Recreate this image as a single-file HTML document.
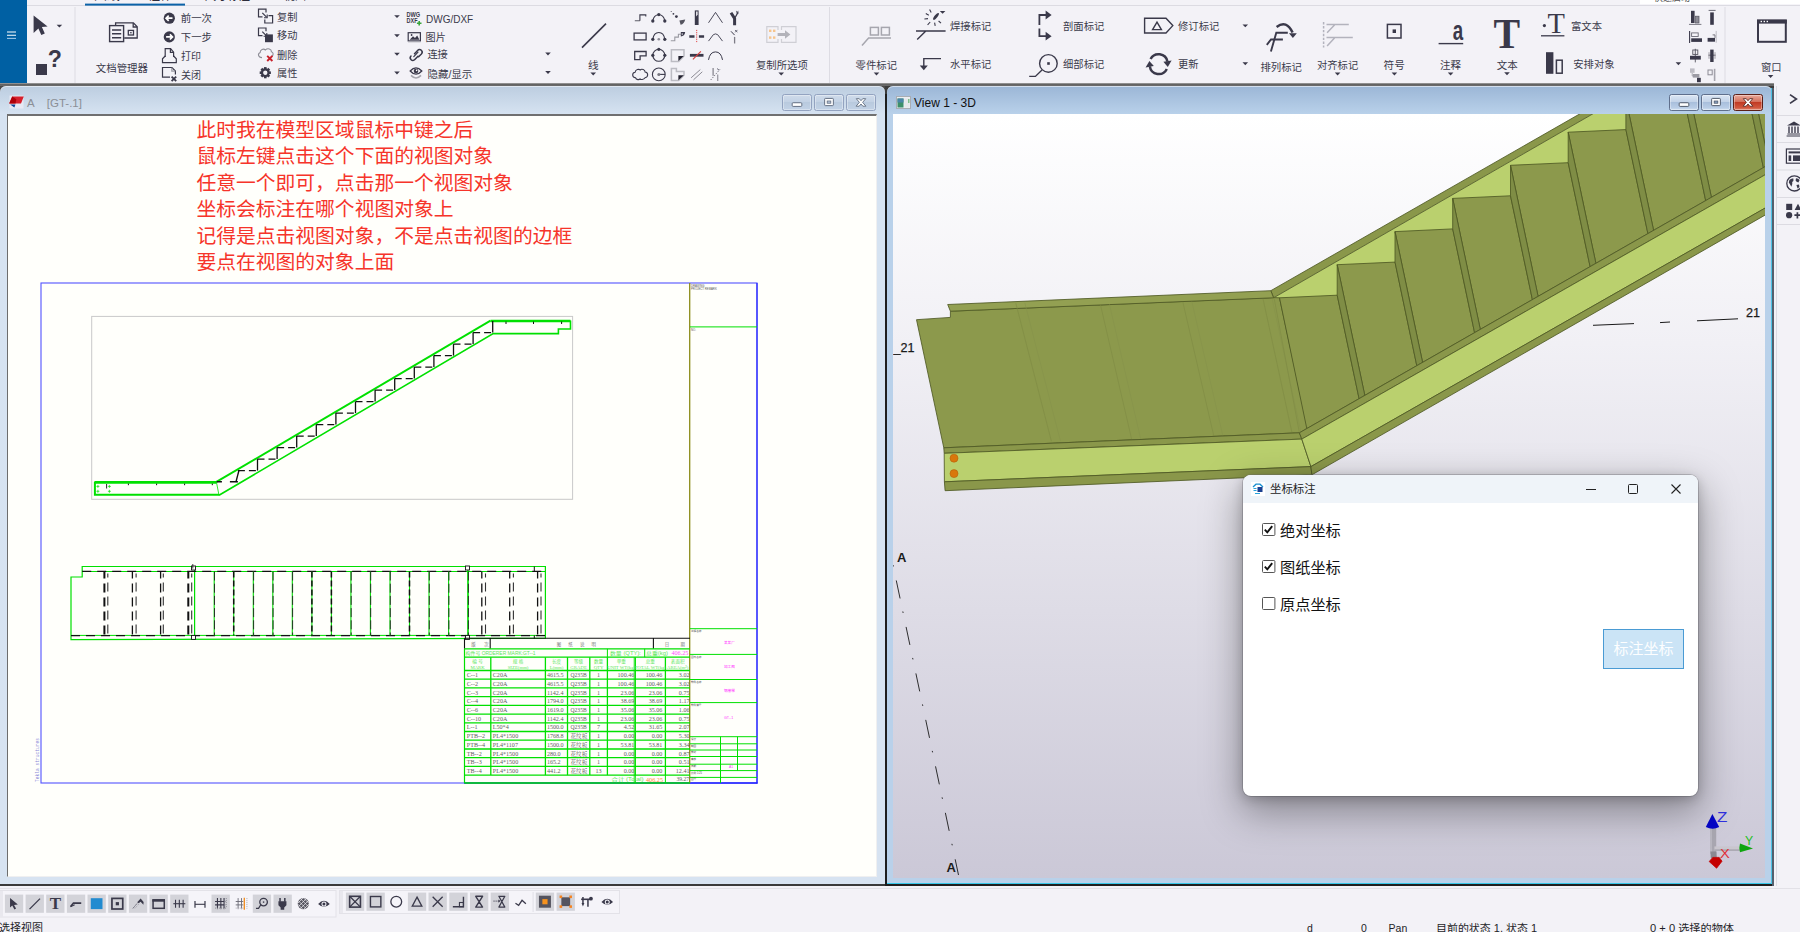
<!DOCTYPE html>
<html lang="zh-CN">
<head>
<meta charset="utf-8">
<title>Tekla Structures - 坐标标注</title>
<style>
*{box-sizing:border-box}
html,body{margin:0;padding:0}
body{width:1800px;height:932px;position:relative;overflow:hidden;background:#f3f2f7;font-family:"Liberation Sans","Noto Sans CJK SC",sans-serif;color:#3b3a4a;font-size:10.5px}
.abs{position:absolute}
svg{position:absolute;left:0;top:0;overflow:hidden}
#ribbon{position:absolute;left:0;top:0;width:1800px;height:83px;background:#f3f2f7;overflow:hidden}
#win1{position:absolute;left:0;top:84px;width:885px;height:802px}
#win2{position:absolute;left:885px;top:84px;width:889px;height:802px}
.wbtn{position:absolute;top:10px;width:30px;height:16px;border:1px solid #8f9fbd;border-radius:3px;background:linear-gradient(#c9d7e8,#b5c7de 50%,#c3d3e7)}
</style>
</head>
<body>

<div id="ribbon">
<svg width="1800" height="84" viewBox="0 0 1800 84"><rect x="0" y="0" width="1800" height="84" fill="#f3f2f7"/>
<rect x="27" y="5" width="1773" height="1" fill="#dcdbe2"/>
<rect x="85" y="3.6" width="100" height="2" fill="#0b62a8"/>
<rect x="0" y="0" width="27" height="83" fill="#0060a3"/>
<path d="M7,32 h9 M7,35.3 h9" stroke="#fff" stroke-width="1.1"/><path d="M7,38.4 h9" stroke="#9cc6e6" stroke-width="1.1"/>
<text x="94" y="0.2" font-size="12.5" fill="#2d2d3c" textLength="26" lengthAdjust="spacingAndGlyphs" >图纸</text>
<text x="149" y="0.2" font-size="12.5" fill="#2d2d3c" textLength="22" lengthAdjust="spacingAndGlyphs" >注释</text>
<text x="205" y="0.2" font-size="12.5" fill="#2d2d3c" textLength="45" lengthAdjust="spacingAndGlyphs" >尺寸标注</text>
<text x="284" y="0.2" font-size="12.5" fill="#2d2d3c" textLength="22" lengthAdjust="spacingAndGlyphs" >视图</text>
<rect x="1640" y="0" width="160" height="4.2" fill="#fff"/>
<text x="1654" y="0.6" font-size="10.5" fill="#555" textLength="36" lengthAdjust="spacingAndGlyphs" >快速启动</text>
<rect x="74.5" y="7" width="1" height="76" fill="#dddce3"/>
<rect x="829" y="7" width="1" height="76" fill="#dddce3"/>
<rect x="1724.5" y="7" width="1" height="76" fill="#dddce3"/>
<polygon points="33.6,15.4 33.6,32.9 38.4,28.4 41.3,35.1 44.8,33.4 41.9,27.1 47.6,26.6" fill="#3a394a"/>
<polygon points="56.6,24.8 62.2,24.8 59.4,27.6" fill="#3a394a"/>
<rect x="36" y="64" width="11" height="11" fill="#3a394a"/>
<text x="47.8" y="67.2" font-size="23.2" fill="#3a394a" font-weight="bold" font-family="Liberation Sans,sans-serif">?</text>
<g fill="none" stroke="#3a394a" stroke-width="1.3"><path d="M115.6,25 V22.9 H133.4 L137.2,26.7 V38 H124.2"/><path d="M133.2,23 V27 H137"/><rect x="128.3" y="30.4" width="5.2" height="4.6"/><rect x="130.2" y="32" width="1.4" height="1.4" fill="#3a394a" stroke="none"/></g>
<rect x="109.6" y="25.6" width="14" height="16" fill="#f3f2f7" stroke="#3a394a" stroke-width="1.4"/><path d="M112,29.9 h9.2 M112,33.8 h9.2 M112,37.7 h9.2" stroke="#3a394a" stroke-width="1.5"/>
<text x="95.8" y="71.95" font-size="10.6" fill="#3b3b4b" textLength="52.2" lengthAdjust="spacingAndGlyphs" >文档管理器</text>
<circle cx="169.3" cy="18.2" r="5.6" fill="#3a394a"/><path d="M172.5,18.2 h-6.2 M168.7,15.6 l-2.6,2.6 l2.6,2.6" stroke="#fff" stroke-width="1.7" fill="none"/>
<circle cx="169.3" cy="36.9" r="5.6" fill="#3a394a"/><path d="M166.1,36.9 h6.2 M169.9,34.3 l2.6,2.6 l-2.6,2.6" stroke="#fff" stroke-width="1.7" fill="none"/>
<text x="180.8" y="21.9" font-size="10.6" fill="#3b3b4b" textLength="31.2" lengthAdjust="spacingAndGlyphs" >前一次</text>
<text x="180.8" y="40.9" font-size="10.6" fill="#3b3b4b" textLength="31.2" lengthAdjust="spacingAndGlyphs" >下一步</text>
<g fill="none" stroke="#3a394a" stroke-width="1.2"><path d="M165.2,57 V48.7 H170.6 L173.6,52.2 V57"/><path d="M170.4,48.9 V52.4 H173.4"/><path d="M165.2,56 L162.5,58.8 V62.6 H176.3 V58.8 L173.6,56"/></g>
<text x="181" y="59.9" font-size="10.6" fill="#3b3b4b" textLength="20" lengthAdjust="spacingAndGlyphs" >打印</text>
<g fill="none" stroke="#3a394a" stroke-width="1.2"><path d="M170,77.2 H162.5 V67.5 H172 L175.4,71 V74.4"/><path d="M171.8,67.7 V71.2 H175.2" stroke="#9a9aa3"/></g><path d="M171.6,76.6 l4.6,4.6 M176.2,76.6 l-4.6,4.6" stroke="#3a394a" stroke-width="1.8"/>
<text x="181" y="79.2" font-size="10.6" fill="#3b3b4b" textLength="20" lengthAdjust="spacingAndGlyphs" >关闭</text>
<g fill="none" stroke="#3a394a" stroke-width="1.2"><path d="M262.5,16.8 H258.5 V9.2 H266 V12.5"/><path d="M268.5,15.6 H272.6 V23 H264.8 V19.5"/><path d="M262.3,12.8 L266.6,17.2"/><path d="M267.2,14.6 V17.8 H264" stroke-width="1.1"/></g>
<text x="277" y="20.55" font-size="10.6" fill="#3b3b4b" textLength="20.4" lengthAdjust="spacingAndGlyphs" >复制</text>
<g fill="none" stroke="#3a394a" stroke-width="1.2"><path d="M262.5,35.6 H258.5 V28 H266 V31.3"/><path d="M262.3,31.6 L266.2,35.6"/><path d="M266.8,33 V36.2 H263.6" stroke-width="1.1"/></g><rect x="265" y="34.4" width="7.9" height="7.8" fill="#3a394a"/>
<text x="277" y="39.3" font-size="10.6" fill="#3b3b4b" textLength="20.4" lengthAdjust="spacingAndGlyphs" >移动</text>
<path d="M262,57.6 C258,57.6 257.4,53.6 260.2,52.4 C260,49.6 263.6,48.2 265.4,50 C267.6,47.6 271.6,49 271.4,51.8 C273.6,52.4 273.6,55.2 272,56" fill="none" stroke="#8d8d96" stroke-width="1.1"/><path d="M267.2,55.8 l5.2,5.2 M272.4,55.8 l-5.2,5.2" stroke="#c8202a" stroke-width="1.9"/>
<text x="277" y="58.8" font-size="10.6" fill="#3b3b4b" textLength="20.4" lengthAdjust="spacingAndGlyphs" >删除</text>
<g transform="translate(265.3,72.7)"><g fill="#3a394a"><rect x="-1.3" y="-5.6" width="2.6" height="3" transform="rotate(0)"/><rect x="-1.3" y="-5.6" width="2.6" height="3" transform="rotate(45)"/><rect x="-1.3" y="-5.6" width="2.6" height="3" transform="rotate(90)"/><rect x="-1.3" y="-5.6" width="2.6" height="3" transform="rotate(135)"/><rect x="-1.3" y="-5.6" width="2.6" height="3" transform="rotate(180)"/><rect x="-1.3" y="-5.6" width="2.6" height="3" transform="rotate(225)"/><rect x="-1.3" y="-5.6" width="2.6" height="3" transform="rotate(270)"/><rect x="-1.3" y="-5.6" width="2.6" height="3" transform="rotate(315)"/></g><circle r="3.3" fill="none" stroke="#3a394a" stroke-width="2.2"/></g>
<text x="277" y="77.05" font-size="10.6" fill="#3b3b4b" textLength="20.4" lengthAdjust="spacingAndGlyphs" >属性</text>
<polygon points="394.2,15.2 399.8,15.2 397.0,18.1" fill="#3a394a"/>
<polygon points="394.2,34.2 399.8,34.2 397.0,37.2" fill="#3a394a"/>
<polygon points="394.2,52.8 399.8,52.8 397.0,55.8" fill="#3a394a"/>
<polygon points="394.2,71.5 399.8,71.5 397.0,74.5" fill="#3a394a"/>
<text x="406.6" y="16.6" font-size="6.6" fill="#3a394a" textLength="13.6" lengthAdjust="spacingAndGlyphs" font-weight="bold" font-family="Liberation Sans,sans-serif">DWG</text>
<text x="406.6" y="22.8" font-size="6.6" fill="#3a394a" textLength="11" lengthAdjust="spacingAndGlyphs" font-weight="bold" font-family="Liberation Sans,sans-serif">DXF</text>
<path d="M419.2,21 v4.6 M416.9,23.3 h4.6" stroke="#3aa53a" stroke-width="1.6"/>
<text x="426" y="22.7" font-size="11" fill="#3b3b4b" textLength="47.2" lengthAdjust="spacingAndGlyphs" font-family="Liberation Sans,sans-serif">DWG/DXF</text>
<rect x="408.2" y="32.7" width="12.2" height="8.2" fill="none" stroke="#3a394a" stroke-width="1.2"/><path d="M409.6,39.8 L413,36.2 L415,38 L417.2,35.6 L419.4,39.8 Z" fill="#3a394a"/><circle cx="411.6" cy="35" r="0.9" fill="#3a394a"/><path d="M408,42 h12.6" stroke="#b9b9c0" stroke-width="0.8"/>
<text x="425.6" y="41.35" font-size="10.6" fill="#3b3b4b" textLength="20.2" lengthAdjust="spacingAndGlyphs" >图片</text>
<g fill="none" stroke="#3a394a" stroke-width="1.5" stroke-linecap="round"><path d="M414.5,53.7 L417.6,50.4 A2.6,2.6 0 0 1 421.4,54 L418.6,56.8"/><path d="M417.6,53 L414.4,56.4 A2.6,2.6 0 0 1 410.6,52.8"  transform="translate(0.4,3.2)"/><path d="M413.8,56.6 L418,52.2" stroke-width="1.2"/></g>
<text x="427.4" y="58.0" font-size="10.6" fill="#3b3b4b" textLength="20.4" lengthAdjust="spacingAndGlyphs" >连接</text>
<path d="M410.2,71 Q416,64.6 421.8,71 Q416,77.4 410.2,71 Z" fill="none" stroke="#3a394a" stroke-width="1.3"/><circle cx="416" cy="71" r="2.3" fill="#3a394a"/><circle cx="416.6" cy="70.4" r="0.8" fill="#fff"/><path d="M411,75.4 Q416,80.6 421,75.4" fill="none" stroke="#a5a5ad" stroke-width="1.6"/>
<text x="427.4" y="77.6" font-size="10.6" fill="#3b3b4b" textLength="45" lengthAdjust="spacingAndGlyphs" >隐藏/显示</text>
<polygon points="545.2,52.5 550.8,52.5 548.0,55.5" fill="#3a394a"/>
<polygon points="545.2,71.1 550.8,71.1 548.0,74.0" fill="#3a394a"/>
<path d="M582,47.6 L606,23.6" stroke="#3a394a" stroke-width="1.6"/>
<text x="588" y="68.5" font-size="10.6" fill="#3b3b4b" >线</text>
<polygon points="590.4,72.5 596.0,72.5 593.2,75.5" fill="#3a394a"/>
<g transform="translate(640.1,17.8)"><path d="M-5.3,2.9 H-0.2" stroke="#77767f" stroke-width="1.2" fill="none"/><path d="M-0.2,2.9 V-2.9 H5.7 V-1.4" fill="none" stroke="#3a394a" stroke-width="1.1"/></g>
<g transform="translate(658.8,17.8)"><path d="M-6,3.2 Q-5,-3 0,-3 Q5,-3 6,3.2" fill="none" stroke="#3a394a" stroke-width="1.1"/><circle cx="-6" cy="3.2" r="1.65" fill="#3a394a"/><circle cx="0" cy="-3.2" r="1.65" fill="#3a394a"/><circle cx="6" cy="3.2" r="1.65" fill="#3a394a"/></g>
<g transform="translate(677.8,17.8)"><circle cx="-6.6" cy="-6.2" r="0.5" fill="#3a394a"/><circle cx="-4.4" cy="-4" r="0.9" fill="#3a394a"/><circle cx="-1.4" cy="-1.2" r="1.4" fill="#3a394a"/><path d="M1.6,2.6 L7.4,1.6 Q6.4,6 2.8,7 Z" fill="#55545f"/></g>
<g transform="translate(696.7,17.8)"><rect x="-1.9" y="-7.4" width="3.8" height="14.6" fill="#3a394a"/><path d="M-0.6,-6.2 V-1.4 L0.9,-3 V-6.2 Z" fill="#f3f2f7"/></g>
<g transform="translate(715.5,17.8)"><path d="M-7,5 L0,-5.4 L7,5" fill="none" stroke="#3a394a" stroke-width="0.9"/></g>
<g transform="translate(734.6,17.8)"><path d="M0,7.4 V0.6 L-3.6,-5" fill="none" stroke="#3a394a" stroke-width="3"/><path d="M0.4,0 L3.4,-5.4" stroke="#3a394a" stroke-width="1.2"/><path d="M1.4,-6.8 l2.8,2.2 M4,-6.6 l-2.6,2" stroke="#3a394a" stroke-width="0.7"/></g>
<g transform="translate(640.1,36.5)"><rect x="-6" y="-3.4" width="12" height="6.8" fill="none" stroke="#3a394a" stroke-width="1.3"/></g>
<g transform="translate(658.8,36.5)"><path d="M-6,2.8 Q-5,-4 0,-4 Q5,-4 6,2.8" fill="none" stroke="#3a394a" stroke-width="1.1"/><circle cx="-6" cy="2.8" r="1.65" fill="#3a394a"/><circle cx="0" cy="2.8" r="1.3" fill="#8d8c96"/><circle cx="6" cy="2.8" r="1.65" fill="#3a394a"/></g>
<g transform="translate(677.8,36.5)"><path d="M-7,4.2 H-3 V0.6 H0.6 V-2.2 H3.2" fill="none" stroke="#9a9aa2" stroke-width="1.1"/><path d="M3,-4.6 H7.4 Q7,-0.6 3,0 Z" fill="#3a394a"/><path d="M4.4,-3.4 v2" stroke="#f3f2f7" stroke-width="0.8"/></g>
<g transform="translate(696.7,36.5)"><path d="M-7.4,0 H-2.2 M2.2,0 H7.4" stroke="#3a394a" stroke-width="2.6"/><path d="M0,-6.6 V6.6" stroke="#e03030" stroke-width="0.9" stroke-dasharray="1.2,1"/></g>
<g transform="translate(715.5,36.5)"><path d="M-7,4.6 L-2.2,-1.8 Q0,-3.4 2.2,-1.8 L7,4.6" fill="none" stroke="#3a394a" stroke-width="0.9"/></g>
<g transform="translate(734.6,36.5)"><path d="M0,7 V0.4" stroke="#7d7c86" stroke-width="1.3"/><path d="M-3.6,-5.2 L0,-1.4" stroke="#3a394a" stroke-width="1"/><path d="M0.4,-6.4 l2.4,2 M2.8,-6.6 l-2.2,2.4" stroke="#3a394a" stroke-width="0.7"/></g>
<g transform="translate(640.1,55.3)"><path d="M-5.4,-3.8 H6 V0.6 H0 V4.4 H-5.4 Z" fill="none" stroke="#3a394a" stroke-width="1.3"/></g>
<g transform="translate(658.8,55.3)"><circle r="6" fill="none" stroke="#3a394a" stroke-width="1.1"/><circle cx="0" cy="-6" r="1.65" fill="#3a394a"/><circle cx="-6" cy="0" r="1.65" fill="#3a394a"/><circle cx="6" cy="0" r="1.65" fill="#3a394a"/></g>
<g transform="translate(677.8,55.3)"><path d="M-6.4,-5.6 H6.2 V0.6 L0.8,6.2 H-6.4 Z" fill="none" stroke="#bcbcc3" stroke-width="1.5"/><path d="M0.6,0.6 H6 L0.6,5.6 Z" fill="#22212e"/></g>
<g transform="translate(696.7,55.3)"><path d="M-6.8,0 H6.8" stroke="#3a394a" stroke-width="2.8"/><path d="M-3.8,4 L4.2,-4" stroke="#d84040" stroke-width="1.1"/></g>
<g transform="translate(715.5,55.3)"><path d="M-7,4.6 Q-5.6,-3.4 0,-3.4 Q5.6,-3.4 7,4.6" fill="none" stroke="#3a394a" stroke-width="1"/></g>
<g transform="translate(640.1,74.4)"><path d="M-4.6,3.4 C-8.4,3 -8.2,-1.8 -5,-2.2 C-4.6,-5.2 -1,-5.6 0,-4.4 C1.6,-6 5,-4.8 5,-2.4 C8.4,-2 8.4,2.6 5,3.4 C3.6,5.6 0.4,5.4 0,4.6 C-1,5.6 -3.8,5.6 -4.6,3.4 Z" fill="none" stroke="#3a394a" stroke-width="1.1"/></g>
<g transform="translate(658.8,74.4)"><circle r="6.4" fill="none" stroke="#3a394a" stroke-width="1.1"/><path d="M0,0 H6.2" stroke="#3a394a" stroke-width="1.1"/><circle cx="0" cy="0" r="1.5" fill="#77767f"/></g>
<g transform="translate(677.8,74.4)"><path d="M-6.4,-6 H-1.4 V-2.8 H6.2 V0.8 L0.8,6.2 H-6.4 Z" fill="none" stroke="#bcbcc3" stroke-width="1.5"/><path d="M0.6,0.8 H6 L0.6,5.8 Z" fill="#22212e"/></g>
<g transform="translate(696.7,74.4)"><path d="M-5.6,3.4 L3.6,-4.8 M-3.2,5.4 L5.6,-2.6" stroke="#8d8c95" stroke-width="1"/></g>
<g transform="translate(715.5,74.4)"><path d="M-2.4,-6.4 V1.4" stroke="#77767f" stroke-width="1.1"/><path d="M2.2,0 V6.6" stroke="#9c9ba3" stroke-width="1.3"/><path d="M-4.8,5.6 L4.4,-5" stroke="#55545f" stroke-width="0.8" stroke-dasharray="1.3,1.3"/><path d="M1.6,-5.8 l2,1.6" stroke="#3a394a" stroke-width="0.8"/></g>
<g fill="none" stroke="#cfcfd5" stroke-width="1.2"><path d="M778,30 V26.6 H766.8 V42.4 H778 V39"/><path d="M781.5,30 V26.6 H796 V42.4 H781.5 V39"/></g><g fill="#f6c48c"><rect x="769" y="29.6" width="2.4" height="2.4"/><rect x="773" y="29.6" width="2.4" height="2.4"/><rect x="769" y="36.4" width="2.4" height="2.4"/><rect x="773" y="36.4" width="2.4" height="2.4"/></g><path d="M777.6,33 h7.4 v-2.8 l5.4,4.3 l-5.4,4.3 v-2.8 h-7.4 Z" fill="#b3b3ba"/>
<text x="756" y="68.5" font-size="10.6" fill="#3b3b4b" textLength="51.8" lengthAdjust="spacingAndGlyphs" >复制所选项</text>
<polygon points="778.4,72.5 784.0,72.5 781.2,75.5" fill="#3a394a"/>
<g fill="none" stroke="#a6a6ae" stroke-width="1.5"><rect x="870.4" y="27.4" width="8" height="7.6"/><rect x="881.4" y="27.4" width="8" height="7.6"/><path d="M891,38 H868.6 L862,45.6"/></g>
<text x="855.6" y="68.5" font-size="10.6" fill="#3b3b4b" textLength="41.4" lengthAdjust="spacingAndGlyphs" >零件标记</text>
<polygon points="873.7,72.5 879.3,72.5 876.5,75.5" fill="#3a394a"/>
<path d="M916,31 H945.6 M917.2,39.6 L925.6,31.2" stroke="#3a394a" stroke-width="1.4" fill="none"/><ellipse cx="936" cy="16.4" rx="1.5" ry="4.2" transform="rotate(38 936 16.4)" fill="#3a394a"/><path d="M925.8,13.6 l3,1.6 M924.4,19 l3.6,-0.4 M927.6,24.8 l2.6,-2.8 M934.6,22.6 l0.6,3.2 M938.6,21 l2.4,2.2 M929.6,9.6 l1.6,2.8" stroke="#3a394a" stroke-width="1.1"/>
<polygon points="939.8,11.0 945.4,11.0 942.6,13.8" fill="#3a394a"/>
<text x="950" y="29.8" font-size="10.6" fill="#3b3b4b" textLength="41.4" lengthAdjust="spacingAndGlyphs" >焊接标记</text>
<path d="M941,58.6 H923.8 V67" stroke="#3a394a" stroke-width="1.4" fill="none"/><polygon points="919.8,65.4 927.8,65.4 923.8,70.2" fill="#3a394a"/>
<text x="950" y="67.9" font-size="10.6" fill="#3b3b4b" textLength="41.4" lengthAdjust="spacingAndGlyphs" >水平标记</text>
<path d="M1039.4,25 V15 H1047" stroke="#3a394a" stroke-width="1.8" fill="none"/><polygon points="1045.6,10.6 1051.6,15 1045.6,19.4" fill="#3a394a"/><path d="M1039.4,28.4 V36.2 H1047" stroke="#3a394a" stroke-width="1.8" fill="none"/><polygon points="1045.6,31.8 1051.6,36.2 1045.6,40.6" fill="#3a394a"/>
<text x="1063" y="29.8" font-size="10.6" fill="#3b3b4b" textLength="41.4" lengthAdjust="spacingAndGlyphs" >剖面标记</text>
<circle cx="1048.4" cy="63.4" r="8.8" fill="none" stroke="#3a394a" stroke-width="1.4"/><rect x="1047.2" y="62.2" width="2.6" height="2.6" fill="#3a394a"/><path d="M1042,70 L1035.4,76.4 H1029.2" stroke="#3a394a" stroke-width="1.4" fill="none"/>
<text x="1063" y="67.9" font-size="10.6" fill="#3b3b4b" textLength="41.4" lengthAdjust="spacingAndGlyphs" >细部标记</text>
<path d="M1144.6,18.2 H1166 L1172.8,25.6 L1166,33 H1144.6 Z" fill="none" stroke="#3a394a" stroke-width="1.4"/><path d="M1157,22.2 L1152.6,29.6 H1161.4 Z" fill="none" stroke="#3a394a" stroke-width="1.4"/>
<text x="1178" y="29.8" font-size="10.6" fill="#3b3b4b" textLength="41.4" lengthAdjust="spacingAndGlyphs" >修订标记</text>
<polygon points="1242.5,24.4 1248.1,24.4 1245.3,27.2" fill="#3a394a"/>
<g fill="none" stroke="#3a394a" stroke-width="2.5"><path d="M1150.6,59 A9,9 0 0 1 1167.4,61.4"/><path d="M1166.8,69 A9,9 0 0 1 1149.8,66.4"/></g><polygon points="1163.4,61.8 1171.6,60.6 1167.8,67" fill="#3a394a"/><polygon points="1153.8,66 1145.6,67.4 1149.4,61" fill="#3a394a"/>
<text x="1178" y="67.5" font-size="10.6" fill="#3b3b4b" textLength="20.6" lengthAdjust="spacingAndGlyphs" >更新</text>
<polygon points="1242.5,62.3 1248.1,62.3 1245.3,65.2" fill="#3a394a"/>
<g fill="none" stroke="#3a394a" stroke-width="1.9"><path d="M1270.9,51.6 L1276.3,32.8 H1287.8"/><path d="M1266.8,44.9 L1271,39.5 H1282.9"/><path d="M1276.6,26.9 Q1286.6,19.4 1292.6,32.6" stroke-width="2.5"/></g><polygon points="1289,33.2 1296.8,33.2 1292.9,37.9" fill="#3a394a"/>
<text x="1260.4" y="71.1" font-size="10.6" fill="#3b3b4b" textLength="41.6" lengthAdjust="spacingAndGlyphs" >排列标记</text>
<g fill="none" stroke="#b3b3bd" stroke-width="1.5"><path d="M1323.6,22.1 V47.6" stroke-dasharray="2.4,1.5"/><path d="M1326.5,24.5 H1348.8 M1334.5,25 L1327.1,32.8"/><path d="M1326.5,37.5 H1352.8 M1334.5,38 L1327.1,45.9"/></g>
<text x="1317" y="68.7" font-size="10.6" fill="#3b3b4b" textLength="41.2" lengthAdjust="spacingAndGlyphs" >对齐标记</text>
<polygon points="1334.8,72.5 1340.4,72.5 1337.6,75.5" fill="#3a394a"/>
<rect x="1387.4" y="24.4" width="13.6" height="13.6" fill="none" stroke="#3a394a" stroke-width="1.5"/><rect x="1392.6" y="29.4" width="3.4" height="3.6" fill="#3a394a"/>
<text x="1383.6" y="68.7" font-size="10.6" fill="#3b3b4b" textLength="21.2" lengthAdjust="spacingAndGlyphs" >符号</text>
<polygon points="1391.6,72.5 1397.2,72.5 1394.4,75.5" fill="#3a394a"/>
<text x="1452.8" y="40.2" font-size="28" fill="#3a394a" textLength="10.4" lengthAdjust="spacingAndGlyphs" font-weight="bold" font-family="Liberation Sans,sans-serif">a</text>
<path d="M1438.6,43.6 H1463.2" stroke="#3a394a" stroke-width="1.4"/>
<text x="1440" y="68.7" font-size="10.6" fill="#3b3b4b" textLength="21" lengthAdjust="spacingAndGlyphs" >注释</text>
<polygon points="1447.8,72.5 1453.4,72.5 1450.6,75.5" fill="#3a394a"/>
<text x="1493.6" y="48.2" font-size="41.5" fill="#3a394a" textLength="26.6" lengthAdjust="spacingAndGlyphs" font-weight="bold" font-family="Liberation Serif,serif">T</text>
<text x="1496.7" y="68.9" font-size="10.6" fill="#3b3b4b" textLength="21" lengthAdjust="spacingAndGlyphs" >文本</text>
<polygon points="1504.2,72.3 1509.8,72.3 1507.0,75.2" fill="#3a394a"/>
<circle cx="1544.4" cy="25.6" r="1.6" fill="#3a394a"/><path d="M1541,35.8 H1564.4" stroke="#3a394a" stroke-width="1.3"/>
<text x="1547.4" y="32.8" font-size="28.5" fill="#3a394a" textLength="17.4" lengthAdjust="spacingAndGlyphs" font-family="Liberation Serif,serif">T</text>
<text x="1571" y="29.8" font-size="10.6" fill="#3b3b4b" textLength="31" lengthAdjust="spacingAndGlyphs" >富文本</text>
<rect x="1546" y="52.2" width="7.4" height="21.6" fill="#3a394a"/><rect x="1556.4" y="60.2" width="5.8" height="13" fill="none" stroke="#3a394a" stroke-width="1.5"/>
<text x="1573.3" y="67.7" font-size="10.6" fill="#3b3b4b" textLength="41.2" lengthAdjust="spacingAndGlyphs" >安排对象</text>
<polygon points="1675.6,62.3 1681.2,62.3 1678.4,65.2" fill="#3a394a"/>
<g transform="translate(1695.6,17.8)"><rect x="-4.6" y="-7" width="3.6" height="12.2" fill="#3a394a"/><rect x="0" y="-1.6" width="3.4" height="6.8" fill="#8d8c96" stroke="#55545f" stroke-width="0.7"/><path d="M-6.6,6.6 H5.8" stroke="#6b6a75" stroke-width="0.9"/></g>
<g transform="translate(1712,17.8)"><path d="M-3.4,-7.4 H3.6" stroke="#6b6a75" stroke-width="1"/><rect x="-1.8" y="-5.4" width="3.6" height="12.4" fill="#3a394a"/></g>
<g transform="translate(1695.6,36.7)"><path d="M-6,-5.8 V6.4" stroke="#3a394a" stroke-width="1.1"/><rect x="-4" y="-3.8" width="6.6" height="3.6" fill="none" stroke="#6b6a75" stroke-width="0.9"/><rect x="-4.4" y="1.6" width="10.8" height="3.6" fill="#3a394a"/></g>
<g transform="translate(1712,36.7)"><rect x="-4.4" y="1.2" width="7.4" height="3.8" fill="#3a394a"/><path d="M0.6,-1.8 h2.4 v3" fill="none" stroke="#6b6a75" stroke-width="0.9"/><path d="M4.2,-5.8 V6" stroke="#b6b5bc" stroke-width="0.9"/></g>
<g transform="translate(1695.6,55.6)"><rect x="-2.8" y="-5.6" width="5" height="4.4" fill="none" stroke="#55545f" stroke-width="0.9"/><path d="M-0.3,-6.8 V6.8" stroke="#55545f" stroke-width="0.9"/><rect x="-5.6" y="0.2" width="10.8" height="3.8" fill="#3a394a"/></g>
<g transform="translate(1712,55.6)"><path d="M-3.6,-0.4 H3.6" stroke="#55545f" stroke-width="0.9"/><rect x="-1.8" y="-6" width="3.4" height="12.4" fill="#3a394a"/><path d="M-3,-3.4 v6.6 M3,-3.4 v6.6" stroke="#8d8c96" stroke-width="0.8"/></g>
<g transform="translate(1695.6,74.4)"><rect x="-5.6" y="-6" width="4.6" height="4.4" fill="#bdbcc4"/><rect x="-2.8" y="-0.4" width="6.6" height="3.6" fill="#9c9ba4"/><rect x="1.4" y="3.4" width="3.8" height="4.4" fill="#3a394a"/><path d="M-3.4,-1.6 V1.6 H-2.6" stroke="#9c9ba4" stroke-width="0.8" fill="none"/></g>
<g transform="translate(1712,74.4)"><rect x="-4" y="-4.4" width="4.2" height="4.8" fill="none" stroke="#8d8c96" stroke-width="1"/><path d="M2.6,-5.6 V6.6" stroke="#a5a4ad" stroke-width="1.6"/></g>
<rect x="1758" y="20.6" width="27.8" height="21.2" fill="none" stroke="#3a394a" stroke-width="2"/><rect x="1757" y="19.6" width="29.8" height="4" fill="#3a394a"/><rect x="1760.6" y="20.8" width="1.4" height="1.4" fill="#fff"/><rect x="1763.6" y="20.8" width="1.4" height="1.4" fill="#fff"/><rect x="1766.6" y="20.8" width="1.4" height="1.4" fill="#fff"/>
<text x="1761" y="71.1" font-size="10.6" fill="#3b3b4b" textLength="20.6" lengthAdjust="spacingAndGlyphs" >窗口</text>
<polygon points="1767.8,75.0 1773.4,75.0 1770.6,77.9" fill="#3a394a"/></svg>
</div>

<div id="win1">
<div class="abs" style="left:0;top:-1px;width:885px;height:3px;background:linear-gradient(#a9a9a9,#626262 45%,#6c6c6c)"></div>
<div class="abs" style="left:0;top:2px;width:885px;height:8px;background:#4a4a4a"></div>
<div class="abs" style="left:0;top:2px;width:885px;height:799px;background:linear-gradient(#bccde0,#d6e3f1 28px,#d7e3f1);border-radius:6px 6px 0 0;box-shadow:inset 0 1px 0 rgba(255,255,255,.5)"></div>
<div class="abs" style="left:0;top:800px;width:885px;height:2px;background:#3a3a3a"></div>
<div class="abs" style="left:7px;top:30px;width:870px;height:763px;background:#fffffb;border-left:1px solid #6d6d6d;border-top:2px solid #707070;border-right:1px solid #f0f0f0;border-bottom:1px solid #f0f0f0"></div>
<svg width="885" height="802" viewBox="0 84 885 802"><text x="196.4" y="136.9" font-size="19.8" fill="#f6342a" font-weight="400">此时我在模型区域鼠标中键之后</text>
<text x="196.4" y="163.3" font-size="19.8" fill="#f6342a" font-weight="400">鼠标左键点击这个下面的视图对象</text>
<text x="196.4" y="189.7" font-size="19.8" fill="#f6342a" font-weight="400">任意一个即可，点击那一个视图对象</text>
<text x="196.4" y="216.1" font-size="19.8" fill="#f6342a" font-weight="400">坐标会标注在哪个视图对象上</text>
<text x="196.4" y="242.5" font-size="19.8" fill="#f6342a" font-weight="400">记得是点击视图对象，不是点击视图的边框</text>
<text x="196.4" y="268.9" font-size="19.8" fill="#f6342a" font-weight="400">要点在视图的对象上面</text>
<rect x="41.0" y="283.0" width="716.0" height="500.0" stroke="#5252ff" stroke-width="1.1" fill="none"/>
<line x1="757.0" y1="283.0" x2="757.0" y2="783.5" stroke="#2222ff" stroke-width="1.15" />
<line x1="464.0" y1="783.0" x2="757.5" y2="783.0" stroke="#2222ff" stroke-width="1.3" />
<rect x="91.7" y="316.4" width="480.9" height="182.9" stroke="#c9c9c9" stroke-width="1" fill="none"/>
<path d="M94.4,482.4 L216.4,482.4" stroke="#00e000" stroke-width="2.6" fill="none"/>
<path d="M94.9,481.9 L94.9,494.8 L219,494.8" stroke="#00e000" stroke-width="2" fill="none"/>
<path d="M219,495.3 L493.2,333.6 L558.4,333.6 L558.4,329 L570.5,329 L570.5,320.6" stroke="#00e000" stroke-width="1.6" fill="none"/>
<path d="M216.4,481.9 L490.5,320.6" stroke="#00e000" stroke-width="1.9" fill="none"/>
<path d="M490.5,321 L570.5,321" stroke="#00e000" stroke-width="2.4" fill="none"/>
<path d="M216.4,481.9 L219,495.3" stroke="#00e000" stroke-width="0.8" fill="none"/>
<path d="M216.6,481.8 L238,481.8" stroke="#111" stroke-width="1.4" fill="none" stroke-dasharray="5.3,8,8,3"/>
<path d="M235.9,482.1 L238.9,470.6" stroke="#111" stroke-width="1.4" fill="none"/>
<path d="M237.9,470.6 L257.5,470.6" stroke="#111" stroke-width="1.1" fill="none" stroke-dasharray="7,4"/>
<path d="M257.5,470.6 L257.5,459.1" stroke="#111" stroke-width="1.3" fill="none"/>
<path d="M257.5,459.1 L277.1,459.1" stroke="#111" stroke-width="1.1" fill="none" stroke-dasharray="7,4"/>
<path d="M277.1,459.1 L277.1,447.6" stroke="#111" stroke-width="1.3" fill="none"/>
<path d="M277.1,447.6 L296.7,447.6" stroke="#111" stroke-width="1.1" fill="none" stroke-dasharray="7,4"/>
<path d="M296.7,447.6 L296.7,436.1" stroke="#111" stroke-width="1.3" fill="none"/>
<path d="M296.7,436.1 L316.3,436.1" stroke="#111" stroke-width="1.1" fill="none" stroke-dasharray="7,4"/>
<path d="M316.3,436.1 L316.3,424.6" stroke="#111" stroke-width="1.3" fill="none"/>
<path d="M316.3,424.6 L335.9,424.6" stroke="#111" stroke-width="1.1" fill="none" stroke-dasharray="7,4"/>
<path d="M335.9,424.6 L335.9,413.1" stroke="#111" stroke-width="1.3" fill="none"/>
<path d="M335.9,413.1 L355.5,413.1" stroke="#111" stroke-width="1.1" fill="none" stroke-dasharray="7,4"/>
<path d="M355.5,413.1 L355.5,401.6" stroke="#111" stroke-width="1.3" fill="none"/>
<path d="M355.5,401.6 L375.1,401.6" stroke="#111" stroke-width="1.1" fill="none" stroke-dasharray="7,4"/>
<path d="M375.1,401.6 L375.1,390.1" stroke="#111" stroke-width="1.3" fill="none"/>
<path d="M375.1,390.1 L394.7,390.1" stroke="#111" stroke-width="1.1" fill="none" stroke-dasharray="7,4"/>
<path d="M394.7,390.1 L394.7,378.6" stroke="#111" stroke-width="1.3" fill="none"/>
<path d="M394.7,378.6 L414.3,378.6" stroke="#111" stroke-width="1.1" fill="none" stroke-dasharray="7,4"/>
<path d="M414.3,378.6 L414.3,367.1" stroke="#111" stroke-width="1.3" fill="none"/>
<path d="M414.3,367.1 L433.9,367.1" stroke="#111" stroke-width="1.1" fill="none" stroke-dasharray="7,4"/>
<path d="M433.9,367.1 L433.9,355.6" stroke="#111" stroke-width="1.3" fill="none"/>
<path d="M433.9,355.6 L453.5,355.6" stroke="#111" stroke-width="1.1" fill="none" stroke-dasharray="7,4"/>
<path d="M453.5,355.6 L453.5,344.1" stroke="#111" stroke-width="1.3" fill="none"/>
<path d="M453.5,344.1 L473.1,344.1" stroke="#111" stroke-width="1.1" fill="none" stroke-dasharray="7,4"/>
<path d="M473.1,344.1 L473.1,332.6" stroke="#111" stroke-width="1.3" fill="none"/>
<path d="M473.1,332.6 L492.7,332.6" stroke="#111" stroke-width="1.1" fill="none" stroke-dasharray="7,4"/>
<path d="M492.7,332.6 L492.7,321.1" stroke="#111" stroke-width="1.3" fill="none"/>
<line x1="128.4" y1="483.6" x2="128.4" y2="485.2" stroke="#111" stroke-width="1" />
<line x1="156.6" y1="483.6" x2="156.6" y2="485.2" stroke="#111" stroke-width="1" />
<line x1="184.6" y1="483.6" x2="184.6" y2="485.2" stroke="#111" stroke-width="1" />
<line x1="212.3" y1="483.6" x2="212.3" y2="485.2" stroke="#111" stroke-width="1" />
<line x1="506.0" y1="321.6" x2="506.0" y2="324.0" stroke="#111" stroke-width="1" />
<line x1="533.5" y1="321.6" x2="533.5" y2="324.0" stroke="#111" stroke-width="1" />
<line x1="561.6" y1="321.6" x2="561.6" y2="324.0" stroke="#111" stroke-width="1" />
<path d="M96.4,486.4 h3 M97.9,484.9 v3" stroke="#00e000" stroke-width="0.7" fill="none"/>
<path d="M96.4,491.3 h3 M97.9,489.8 v3" stroke="#00e000" stroke-width="0.7" fill="none"/>
<path d="M107.9,486.4 h3 M109.4,484.9 v3" stroke="#00e000" stroke-width="0.7" fill="none"/>
<path d="M107.9,491.3 h3 M109.4,489.8 v3" stroke="#00e000" stroke-width="0.7" fill="none"/>
<line x1="106.6" y1="484.0" x2="106.6" y2="488.5" stroke="#111" stroke-width="0.9" />
<path d="M82.2,566.5 L545.4,566.5 L545.4,638.2 L71,639.6 L71,577 L82.2,577 Z" stroke="#00e000" stroke-width="1.2" fill="none"/>
<line x1="82.2" y1="571.5" x2="545.4" y2="571.5" stroke="#00e000" stroke-width="1" />
<line x1="71.0" y1="635.4" x2="545.4" y2="635.4" stroke="#00e000" stroke-width="1" />
<line x1="194.6" y1="566.5" x2="194.6" y2="639.6" stroke="#00e000" stroke-width="1.2" />
<line x1="467.9" y1="566.5" x2="467.9" y2="639.6" stroke="#00e000" stroke-width="1.2" />
<line x1="82.2" y1="571.3" x2="545.4" y2="571.3" stroke="#111" stroke-width="1.2" stroke-dasharray="9,6"/>
<line x1="71.0" y1="635.6" x2="545.4" y2="635.6" stroke="#111" stroke-width="1.2" stroke-dasharray="9,6"/>
<line x1="104.4" y1="571.5" x2="104.4" y2="635.4" stroke="#111" stroke-width="2.0" stroke-dasharray="9,5" stroke-dashoffset="2"/>
<line x1="107.8" y1="573.5" x2="107.8" y2="635.4" stroke="#333" stroke-width="1.1" stroke-dasharray="9,5" stroke-dashoffset="5"/>
<line x1="132.4" y1="571.5" x2="132.4" y2="635.4" stroke="#111" stroke-width="1.3" stroke-dasharray="9,5" stroke-dashoffset="2"/>
<line x1="136.1" y1="573.5" x2="136.1" y2="635.4" stroke="#333" stroke-width="1.1" stroke-dasharray="9,5" stroke-dashoffset="5"/>
<line x1="160.6" y1="571.5" x2="160.6" y2="635.4" stroke="#111" stroke-width="1.3" stroke-dasharray="9,5" stroke-dashoffset="2"/>
<line x1="163.3" y1="573.5" x2="163.3" y2="635.4" stroke="#333" stroke-width="1.1" stroke-dasharray="9,5" stroke-dashoffset="5"/>
<line x1="188.3" y1="571.5" x2="188.3" y2="635.4" stroke="#111" stroke-width="2.0" stroke-dasharray="9,5" stroke-dashoffset="2"/>
<line x1="191.7" y1="573.5" x2="191.7" y2="635.4" stroke="#333" stroke-width="1.1" stroke-dasharray="9,5" stroke-dashoffset="5"/>
<line x1="481.8" y1="571.5" x2="481.8" y2="635.4" stroke="#111" stroke-width="1.3" stroke-dasharray="9,5" stroke-dashoffset="2"/>
<line x1="485.5" y1="573.5" x2="485.5" y2="635.4" stroke="#333" stroke-width="1.1" stroke-dasharray="9,5" stroke-dashoffset="5"/>
<line x1="509.7" y1="571.5" x2="509.7" y2="635.4" stroke="#111" stroke-width="1.3" stroke-dasharray="9,5" stroke-dashoffset="2"/>
<line x1="513.4" y1="573.5" x2="513.4" y2="635.4" stroke="#333" stroke-width="1.1" stroke-dasharray="9,5" stroke-dashoffset="5"/>
<line x1="537.6" y1="571.5" x2="537.6" y2="635.4" stroke="#111" stroke-width="1.3" stroke-dasharray="9,5" stroke-dashoffset="2"/>
<line x1="541.0" y1="573.5" x2="541.0" y2="635.4" stroke="#333" stroke-width="1.1" stroke-dasharray="9,5" stroke-dashoffset="5"/>
<line x1="534.3" y1="566.5" x2="534.3" y2="571.5" stroke="#111" stroke-width="1" />
<line x1="534.3" y1="635.4" x2="534.3" y2="638.5" stroke="#111" stroke-width="1" />
<line x1="214.2" y1="571.5" x2="214.2" y2="635.4" stroke="#00e000" stroke-width="1.1" />
<line x1="214.5" y1="571.5" x2="214.5" y2="635.4" stroke="#222" stroke-width="0.9" stroke-dasharray="9,3.2"/>
<line x1="233.7" y1="571.5" x2="233.7" y2="635.4" stroke="#00e000" stroke-width="1.1" />
<line x1="233.7" y1="571.5" x2="233.7" y2="635.4" stroke="#111" stroke-width="1.5" stroke-dasharray="6,3"/>
<line x1="253.3" y1="571.5" x2="253.3" y2="635.4" stroke="#00e000" stroke-width="1.1" />
<line x1="253.6" y1="571.5" x2="253.6" y2="635.4" stroke="#222" stroke-width="0.9" stroke-dasharray="9,3.2"/>
<line x1="272.8" y1="571.5" x2="272.8" y2="635.4" stroke="#00e000" stroke-width="1.1" />
<line x1="273.1" y1="571.5" x2="273.1" y2="635.4" stroke="#222" stroke-width="0.9" stroke-dasharray="9,3.2"/>
<line x1="292.3" y1="571.5" x2="292.3" y2="635.4" stroke="#00e000" stroke-width="1.1" />
<line x1="292.6" y1="571.5" x2="292.6" y2="635.4" stroke="#222" stroke-width="0.9" stroke-dasharray="9,3.2"/>
<line x1="311.9" y1="571.5" x2="311.9" y2="635.4" stroke="#00e000" stroke-width="1.1" />
<line x1="311.9" y1="571.5" x2="311.9" y2="635.4" stroke="#111" stroke-width="1.5" stroke-dasharray="6,3"/>
<line x1="331.4" y1="571.5" x2="331.4" y2="635.4" stroke="#00e000" stroke-width="1.1" />
<line x1="331.4" y1="571.5" x2="331.4" y2="635.4" stroke="#111" stroke-width="1.5" stroke-dasharray="6,3"/>
<line x1="350.9" y1="571.5" x2="350.9" y2="635.4" stroke="#00e000" stroke-width="1.1" />
<line x1="351.2" y1="571.5" x2="351.2" y2="635.4" stroke="#222" stroke-width="0.9" stroke-dasharray="9,3.2"/>
<line x1="370.4" y1="571.5" x2="370.4" y2="635.4" stroke="#00e000" stroke-width="1.1" />
<line x1="370.7" y1="571.5" x2="370.7" y2="635.4" stroke="#222" stroke-width="0.9" stroke-dasharray="9,3.2"/>
<line x1="390.0" y1="571.5" x2="390.0" y2="635.4" stroke="#00e000" stroke-width="1.1" />
<line x1="390.3" y1="571.5" x2="390.3" y2="635.4" stroke="#222" stroke-width="0.9" stroke-dasharray="9,3.2"/>
<line x1="409.5" y1="571.5" x2="409.5" y2="635.4" stroke="#00e000" stroke-width="1.1" />
<line x1="409.5" y1="571.5" x2="409.5" y2="635.4" stroke="#111" stroke-width="1.5" stroke-dasharray="6,3"/>
<line x1="429.0" y1="571.5" x2="429.0" y2="635.4" stroke="#00e000" stroke-width="1.1" />
<line x1="429.3" y1="571.5" x2="429.3" y2="635.4" stroke="#222" stroke-width="0.9" stroke-dasharray="9,3.2"/>
<line x1="448.6" y1="571.5" x2="448.6" y2="635.4" stroke="#00e000" stroke-width="1.1" />
<line x1="448.9" y1="571.5" x2="448.9" y2="635.4" stroke="#222" stroke-width="0.9" stroke-dasharray="9,3.2"/>
<line x1="468.1" y1="571.5" x2="468.1" y2="635.4" stroke="#00e000" stroke-width="1.1" />
<line x1="468.4" y1="571.5" x2="468.4" y2="635.4" stroke="#222" stroke-width="0.9" stroke-dasharray="9,3.2"/>
<rect x="191.5" y="566.0" width="4.0" height="4.0" stroke="#111" stroke-width="0.9" fill="#fffffb"/>
<rect x="191.5" y="635.4" width="4.0" height="4.0" stroke="#111" stroke-width="0.9" fill="#fffffb"/>
<rect x="465.5" y="566.0" width="4.0" height="4.0" stroke="#111" stroke-width="0.9" fill="#fffffb"/>
<rect x="465.5" y="635.4" width="4.0" height="4.0" stroke="#111" stroke-width="0.9" fill="#fffffb"/>
<line x1="192.8" y1="564.0" x2="192.8" y2="568.6" stroke="#111" stroke-width="0.8" />
<line x1="689.7" y1="283.0" x2="689.7" y2="783.0" stroke="#8c8c1a" stroke-width="1.3" />
<line x1="690.0" y1="326.9" x2="757.0" y2="326.9" stroke="#00e000" stroke-width="1" />
<line x1="690.0" y1="628.7" x2="757.0" y2="628.7" stroke="#00e000" stroke-width="1" />
<line x1="690.0" y1="654.4" x2="757.0" y2="654.4" stroke="#00e000" stroke-width="1" />
<line x1="690.0" y1="679.5" x2="757.0" y2="679.5" stroke="#00e000" stroke-width="1" />
<line x1="690.0" y1="702.6" x2="757.0" y2="702.6" stroke="#00e000" stroke-width="1" />
<line x1="690.0" y1="736.7" x2="757.0" y2="736.7" stroke="#00e000" stroke-width="1" />
<line x1="690.0" y1="743.8" x2="757.0" y2="743.8" stroke="#00e000" stroke-width="1" />
<line x1="690.0" y1="750.0" x2="757.0" y2="750.0" stroke="#00e000" stroke-width="1" />
<line x1="690.0" y1="756.5" x2="757.0" y2="756.5" stroke="#00e000" stroke-width="1" />
<line x1="690.0" y1="764.2" x2="757.0" y2="764.2" stroke="#00e000" stroke-width="1" />
<line x1="690.0" y1="770.6" x2="757.0" y2="770.6" stroke="#00e000" stroke-width="1" />
<line x1="690.0" y1="777.4" x2="757.0" y2="777.4" stroke="#00e000" stroke-width="1" />
<line x1="720.5" y1="736.7" x2="720.5" y2="783.0" stroke="#00e000" stroke-width="1" />
<line x1="737.5" y1="736.7" x2="737.5" y2="770.6" stroke="#00e000" stroke-width="1" />
<text x="691.0" y="286.5" font-size="2.8" fill="#555" font-family="Liberation Sans,Noto Sans CJK SC,sans-serif">DRAWING</text>
<text x="691.0" y="290.2" font-size="2.8" fill="#555" font-family="Liberation Sans,Noto Sans CJK SC,sans-serif">PROJECT REMARK</text>
<text x="691.0" y="330.5" font-size="2.8" fill="#555" font-family="Liberation Sans,Noto Sans CJK SC,sans-serif">NO.</text>
<text x="724.0" y="643.5" font-size="3.6" fill="#ff30ff" font-family="Liberation Sans,Noto Sans CJK SC,sans-serif">某某厂</text>
<text x="724.0" y="668.0" font-size="3.6" fill="#ff30ff" font-family="Liberation Sans,Noto Sans CJK SC,sans-serif">加工图</text>
<text x="724.0" y="692.0" font-size="3.6" fill="#ff30ff" font-family="Liberation Sans,Noto Sans CJK SC,sans-serif">钢楼梯</text>
<text x="724.0" y="719.0" font-size="3.6" fill="#ff30ff" font-family="Liberation Sans,Noto Sans CJK SC,sans-serif">GT--1</text>
<text x="729.0" y="767.5" font-size="3.4" fill="#ff30ff" font-family="Liberation Sans,Noto Sans CJK SC,sans-serif">A1</text>
<text x="691.0" y="632.0" font-size="2.6" fill="#444" font-family="Liberation Sans,Noto Sans CJK SC,sans-serif">工程名称</text>
<text x="691.0" y="658.0" font-size="2.6" fill="#444" font-family="Liberation Sans,Noto Sans CJK SC,sans-serif">图纸名称</text>
<text x="691.0" y="683.0" font-size="2.6" fill="#444" font-family="Liberation Sans,Noto Sans CJK SC,sans-serif">构件名称</text>
<text x="691.0" y="706.0" font-size="2.6" fill="#444" font-family="Liberation Sans,Noto Sans CJK SC,sans-serif">构件编号</text>
<text x="691.0" y="740.0" font-size="2.6" fill="#444" font-family="Liberation Sans,Noto Sans CJK SC,sans-serif">设计</text>
<text x="691.0" y="746.5" font-size="2.6" fill="#444" font-family="Liberation Sans,Noto Sans CJK SC,sans-serif">制图</text>
<text x="691.0" y="753.0" font-size="2.6" fill="#444" font-family="Liberation Sans,Noto Sans CJK SC,sans-serif">校对</text>
<text x="691.0" y="760.0" font-size="2.6" fill="#444" font-family="Liberation Sans,Noto Sans CJK SC,sans-serif">审核</text>
<text x="691.0" y="766.5" font-size="2.6" fill="#444" font-family="Liberation Sans,Noto Sans CJK SC,sans-serif">日期</text>
<text x="691.0" y="773.5" font-size="2.6" fill="#444" font-family="Liberation Sans,Noto Sans CJK SC,sans-serif">比例  1:25</text>
<text x="691.0" y="780.0" font-size="2.6" fill="#444" font-family="Liberation Sans,Noto Sans CJK SC,sans-serif">图号</text>
<path d="M464.5,638.2 L690,638.2 M464.5,638.2 L464.5,648.8 M490.2,638.2 L490.2,648.8 M653.4,638.2 L653.4,648.8" stroke="#111" stroke-width="1.1" fill="none"/>
<text x="471.3" y="645.6" font-size="4.4" fill="#777" font-family="Liberation Sans,Noto Sans CJK SC,sans-serif" textLength="17.4" lengthAdjust="spacing">版  次</text>
<text x="556.7" y="645.6" font-size="4.4" fill="#777" font-family="Liberation Sans,Noto Sans CJK SC,sans-serif" textLength="39.3" lengthAdjust="spacing">图 纸 说 明</text>
<text x="664.7" y="645.6" font-size="4.4" fill="#777" font-family="Liberation Sans,Noto Sans CJK SC,sans-serif" textLength="20.3" lengthAdjust="spacing">日    期</text>
<line x1="464.5" y1="648.8" x2="690.0" y2="648.8" stroke="#00e000" stroke-width="1.3" />
<line x1="464.5" y1="657.2" x2="690.0" y2="657.2" stroke="#00e000" stroke-width="1.3" />
<line x1="464.5" y1="670.5" x2="690.0" y2="670.5" stroke="#00e000" stroke-width="1.3" />
<line x1="464.5" y1="679.2" x2="690.0" y2="679.2" stroke="#00e000" stroke-width="1.3" />
<line x1="464.5" y1="687.9" x2="690.0" y2="687.9" stroke="#00e000" stroke-width="1.3" />
<line x1="464.5" y1="696.6" x2="690.0" y2="696.6" stroke="#00e000" stroke-width="1.3" />
<line x1="464.5" y1="705.4" x2="690.0" y2="705.4" stroke="#00e000" stroke-width="1.3" />
<line x1="464.5" y1="714.1" x2="690.0" y2="714.1" stroke="#00e000" stroke-width="1.3" />
<line x1="464.5" y1="722.8" x2="690.0" y2="722.8" stroke="#00e000" stroke-width="1.3" />
<line x1="464.5" y1="731.5" x2="690.0" y2="731.5" stroke="#00e000" stroke-width="1.3" />
<line x1="464.5" y1="740.2" x2="690.0" y2="740.2" stroke="#00e000" stroke-width="1.3" />
<line x1="464.5" y1="749.0" x2="690.0" y2="749.0" stroke="#00e000" stroke-width="1.3" />
<line x1="464.5" y1="757.7" x2="690.0" y2="757.7" stroke="#00e000" stroke-width="1.3" />
<line x1="464.5" y1="766.4" x2="690.0" y2="766.4" stroke="#00e000" stroke-width="1.3" />
<line x1="464.5" y1="775.1" x2="690.0" y2="775.1" stroke="#00e000" stroke-width="1.3" />
<line x1="464.5" y1="783.0" x2="690.0" y2="783.0" stroke="#00e000" stroke-width="1.3" />
<line x1="464.5" y1="648.8" x2="464.5" y2="783.0" stroke="#00e000" stroke-width="1.2" />
<line x1="490.8" y1="657.2" x2="490.8" y2="775.1" stroke="#00e000" stroke-width="1.3" />
<line x1="545.4" y1="657.2" x2="545.4" y2="775.1" stroke="#00e000" stroke-width="1.3" />
<line x1="567.5" y1="657.2" x2="567.5" y2="775.1" stroke="#00e000" stroke-width="1.3" />
<line x1="589.8" y1="657.2" x2="589.8" y2="775.1" stroke="#00e000" stroke-width="1.3" />
<line x1="607.4" y1="657.2" x2="607.4" y2="775.1" stroke="#00e000" stroke-width="1.3" />
<line x1="635.3" y1="657.2" x2="635.3" y2="775.1" stroke="#00e000" stroke-width="1.3" />
<line x1="665.4" y1="657.2" x2="665.4" y2="775.1" stroke="#00e000" stroke-width="1.3" />
<line x1="607.4" y1="648.8" x2="607.4" y2="657.2" stroke="#00e000" stroke-width="1" />
<line x1="644.7" y1="648.8" x2="644.7" y2="657.2" stroke="#00e000" stroke-width="1" />
<line x1="635.3" y1="775.1" x2="635.3" y2="783.0" stroke="#00e000" stroke-width="1" />
<line x1="665.4" y1="775.1" x2="665.4" y2="783.0" stroke="#00e000" stroke-width="1" />
<line x1="634.2" y1="657.2" x2="634.2" y2="783.0" stroke="#00e000" stroke-width="0.8" />
<text x="465.6" y="655.3" font-size="5" fill="#5fe65f" font-family="Liberation Sans,Noto Sans CJK SC,sans-serif" textLength="70" lengthAdjust="spacingAndGlyphs">构件号 ORDERER MARK:GT--1</text>
<text x="610.0" y="655.3" font-size="5" fill="#5fe65f" font-family="Liberation Sans,Noto Sans CJK SC,sans-serif" textLength="31" lengthAdjust="spacingAndGlyphs">数量 (QTY):</text>
<text x="646.0" y="655.3" font-size="5" fill="#5fe65f" font-family="Liberation Sans,Noto Sans CJK SC,sans-serif" textLength="22" lengthAdjust="spacingAndGlyphs">总重(kg)</text>
<text x="671.4" y="655.3" font-size="5.4" fill="#ff50ff" font-family="Liberation Serif,serif" textLength="17" lengthAdjust="spacingAndGlyphs">406.25</text>
<text x="477.6" y="663.0" font-size="4.6" fill="#5fe65f" font-family="Liberation Sans,Noto Sans CJK SC,sans-serif" text-anchor="middle">编  号</text>
<text x="477.6" y="669.3" font-size="4.8" fill="#5fe65f" font-family="Liberation Serif,serif" text-anchor="middle">MARK</text>
<text x="518.1" y="663.0" font-size="4.6" fill="#5fe65f" font-family="Liberation Sans,Noto Sans CJK SC,sans-serif" text-anchor="middle">规  格</text>
<text x="518.1" y="669.3" font-size="4.8" fill="#5fe65f" font-family="Liberation Serif,serif" text-anchor="middle">SIZE(mm)</text>
<text x="556.5" y="663.0" font-size="4.6" fill="#5fe65f" font-family="Liberation Sans,Noto Sans CJK SC,sans-serif" text-anchor="middle">长度</text>
<text x="556.5" y="669.3" font-size="4.8" fill="#5fe65f" font-family="Liberation Serif,serif" text-anchor="middle">L(mm)</text>
<text x="578.6" y="663.0" font-size="4.6" fill="#5fe65f" font-family="Liberation Sans,Noto Sans CJK SC,sans-serif" text-anchor="middle">等级</text>
<text x="578.6" y="669.3" font-size="4.8" fill="#5fe65f" font-family="Liberation Serif,serif" text-anchor="middle">GRADE</text>
<text x="598.6" y="663.0" font-size="4.6" fill="#5fe65f" font-family="Liberation Sans,Noto Sans CJK SC,sans-serif" text-anchor="middle">数量</text>
<text x="598.6" y="669.3" font-size="4.8" fill="#5fe65f" font-family="Liberation Serif,serif" text-anchor="middle">QTY</text>
<text x="621.3" y="663.0" font-size="4.6" fill="#5fe65f" font-family="Liberation Sans,Noto Sans CJK SC,sans-serif" text-anchor="middle">单重</text>
<text x="621.3" y="669.3" font-size="4.8" fill="#5fe65f" font-family="Liberation Serif,serif" text-anchor="middle">UNIT WT(kg)</text>
<text x="650.3" y="663.0" font-size="4.6" fill="#5fe65f" font-family="Liberation Sans,Noto Sans CJK SC,sans-serif" text-anchor="middle">总重</text>
<text x="650.3" y="669.3" font-size="4.8" fill="#5fe65f" font-family="Liberation Serif,serif" text-anchor="middle">TOTAL WT(kg)</text>
<text x="677.7" y="663.0" font-size="4.6" fill="#5fe65f" font-family="Liberation Sans,Noto Sans CJK SC,sans-serif" text-anchor="middle">表面积</text>
<text x="677.7" y="669.3" font-size="4.8" fill="#5fe65f" font-family="Liberation Serif,serif" text-anchor="middle">AREA(m²)</text>
<text x="466.8" y="677.1" font-size="6.1" fill="#5e5e5e" font-family="Liberation Serif,serif">C--1</text>
<text x="492.8" y="677.1" font-size="6.1" fill="#5e5e5e" font-family="Liberation Serif,serif">C20A</text>
<text x="546.9" y="677.1" font-size="6.1" fill="#5e5e5e" font-family="Liberation Serif,serif">4615.5</text>
<text x="570.5" y="677.1" font-size="5.6" fill="#5e5e5e" font-family="Liberation Serif,Noto Serif CJK SC,serif">Q235B</text>
<text x="598.6" y="677.1" font-size="6.1" fill="#5e5e5e" font-family="Liberation Serif,serif" text-anchor="middle">1</text>
<text x="634.3" y="677.1" font-size="6.1" fill="#5e5e5e" font-family="Liberation Serif,serif" text-anchor="end">100.46</text>
<text x="662.4" y="677.1" font-size="6.1" fill="#5e5e5e" font-family="Liberation Serif,serif" text-anchor="end">100.46</text>
<text x="689.5" y="677.1" font-size="6.1" fill="#5e5e5e" font-family="Liberation Serif,serif" text-anchor="end">3.02</text>
<text x="466.8" y="685.8" font-size="6.1" fill="#5e5e5e" font-family="Liberation Serif,serif">C--2</text>
<text x="492.8" y="685.8" font-size="6.1" fill="#5e5e5e" font-family="Liberation Serif,serif">C20A</text>
<text x="546.9" y="685.8" font-size="6.1" fill="#5e5e5e" font-family="Liberation Serif,serif">4615.5</text>
<text x="570.5" y="685.8" font-size="5.6" fill="#5e5e5e" font-family="Liberation Serif,Noto Serif CJK SC,serif">Q235B</text>
<text x="598.6" y="685.8" font-size="6.1" fill="#5e5e5e" font-family="Liberation Serif,serif" text-anchor="middle">1</text>
<text x="634.3" y="685.8" font-size="6.1" fill="#5e5e5e" font-family="Liberation Serif,serif" text-anchor="end">100.46</text>
<text x="662.4" y="685.8" font-size="6.1" fill="#5e5e5e" font-family="Liberation Serif,serif" text-anchor="end">100.46</text>
<text x="689.5" y="685.8" font-size="6.1" fill="#5e5e5e" font-family="Liberation Serif,serif" text-anchor="end">3.02</text>
<text x="466.8" y="694.5" font-size="6.1" fill="#5e5e5e" font-family="Liberation Serif,serif">C--3</text>
<text x="492.8" y="694.5" font-size="6.1" fill="#5e5e5e" font-family="Liberation Serif,serif">C20A</text>
<text x="546.9" y="694.5" font-size="6.1" fill="#5e5e5e" font-family="Liberation Serif,serif">1142.4</text>
<text x="570.5" y="694.5" font-size="5.6" fill="#5e5e5e" font-family="Liberation Serif,Noto Serif CJK SC,serif">Q235B</text>
<text x="598.6" y="694.5" font-size="6.1" fill="#5e5e5e" font-family="Liberation Serif,serif" text-anchor="middle">1</text>
<text x="634.3" y="694.5" font-size="6.1" fill="#5e5e5e" font-family="Liberation Serif,serif" text-anchor="end">23.06</text>
<text x="662.4" y="694.5" font-size="6.1" fill="#5e5e5e" font-family="Liberation Serif,serif" text-anchor="end">23.06</text>
<text x="689.5" y="694.5" font-size="6.1" fill="#5e5e5e" font-family="Liberation Serif,serif" text-anchor="end">0.75</text>
<text x="466.8" y="703.2" font-size="6.1" fill="#5e5e5e" font-family="Liberation Serif,serif">C--4</text>
<text x="492.8" y="703.2" font-size="6.1" fill="#5e5e5e" font-family="Liberation Serif,serif">C20A</text>
<text x="546.9" y="703.2" font-size="6.1" fill="#5e5e5e" font-family="Liberation Serif,serif">1794.0</text>
<text x="570.5" y="703.2" font-size="5.6" fill="#5e5e5e" font-family="Liberation Serif,Noto Serif CJK SC,serif">Q235B</text>
<text x="598.6" y="703.2" font-size="6.1" fill="#5e5e5e" font-family="Liberation Serif,serif" text-anchor="middle">1</text>
<text x="634.3" y="703.2" font-size="6.1" fill="#5e5e5e" font-family="Liberation Serif,serif" text-anchor="end">38.69</text>
<text x="662.4" y="703.2" font-size="6.1" fill="#5e5e5e" font-family="Liberation Serif,serif" text-anchor="end">38.69</text>
<text x="689.5" y="703.2" font-size="6.1" fill="#5e5e5e" font-family="Liberation Serif,serif" text-anchor="end">1.17</text>
<text x="466.8" y="712.0" font-size="6.1" fill="#5e5e5e" font-family="Liberation Serif,serif">C--6</text>
<text x="492.8" y="712.0" font-size="6.1" fill="#5e5e5e" font-family="Liberation Serif,serif">C20A</text>
<text x="546.9" y="712.0" font-size="6.1" fill="#5e5e5e" font-family="Liberation Serif,serif">1619.0</text>
<text x="570.5" y="712.0" font-size="5.6" fill="#5e5e5e" font-family="Liberation Serif,Noto Serif CJK SC,serif">Q235B</text>
<text x="598.6" y="712.0" font-size="6.1" fill="#5e5e5e" font-family="Liberation Serif,serif" text-anchor="middle">1</text>
<text x="634.3" y="712.0" font-size="6.1" fill="#5e5e5e" font-family="Liberation Serif,serif" text-anchor="end">35.06</text>
<text x="662.4" y="712.0" font-size="6.1" fill="#5e5e5e" font-family="Liberation Serif,serif" text-anchor="end">35.06</text>
<text x="689.5" y="712.0" font-size="6.1" fill="#5e5e5e" font-family="Liberation Serif,serif" text-anchor="end">1.06</text>
<text x="466.8" y="720.7" font-size="6.1" fill="#5e5e5e" font-family="Liberation Serif,serif">C--10</text>
<text x="492.8" y="720.7" font-size="6.1" fill="#5e5e5e" font-family="Liberation Serif,serif">C20A</text>
<text x="546.9" y="720.7" font-size="6.1" fill="#5e5e5e" font-family="Liberation Serif,serif">1142.4</text>
<text x="570.5" y="720.7" font-size="5.6" fill="#5e5e5e" font-family="Liberation Serif,Noto Serif CJK SC,serif">Q235B</text>
<text x="598.6" y="720.7" font-size="6.1" fill="#5e5e5e" font-family="Liberation Serif,serif" text-anchor="middle">1</text>
<text x="634.3" y="720.7" font-size="6.1" fill="#5e5e5e" font-family="Liberation Serif,serif" text-anchor="end">23.06</text>
<text x="662.4" y="720.7" font-size="6.1" fill="#5e5e5e" font-family="Liberation Serif,serif" text-anchor="end">23.06</text>
<text x="689.5" y="720.7" font-size="6.1" fill="#5e5e5e" font-family="Liberation Serif,serif" text-anchor="end">0.75</text>
<text x="466.8" y="729.4" font-size="6.1" fill="#5e5e5e" font-family="Liberation Serif,serif">L--1</text>
<text x="492.8" y="729.4" font-size="6.1" fill="#5e5e5e" font-family="Liberation Serif,serif">L50*4</text>
<text x="546.9" y="729.4" font-size="6.1" fill="#5e5e5e" font-family="Liberation Serif,serif">1500.0</text>
<text x="570.5" y="729.4" font-size="5.6" fill="#5e5e5e" font-family="Liberation Serif,Noto Serif CJK SC,serif">Q235B</text>
<text x="598.6" y="729.4" font-size="6.1" fill="#5e5e5e" font-family="Liberation Serif,serif" text-anchor="middle">7</text>
<text x="634.3" y="729.4" font-size="6.1" fill="#5e5e5e" font-family="Liberation Serif,serif" text-anchor="end">4.52</text>
<text x="662.4" y="729.4" font-size="6.1" fill="#5e5e5e" font-family="Liberation Serif,serif" text-anchor="end">31.65</text>
<text x="689.5" y="729.4" font-size="6.1" fill="#5e5e5e" font-family="Liberation Serif,serif" text-anchor="end">2.07</text>
<text x="466.8" y="738.1" font-size="6.1" fill="#5e5e5e" font-family="Liberation Serif,serif">PTB--2</text>
<text x="492.8" y="738.1" font-size="6.1" fill="#5e5e5e" font-family="Liberation Serif,serif">PL4*1500</text>
<text x="546.9" y="738.1" font-size="6.1" fill="#5e5e5e" font-family="Liberation Serif,serif">1768.8</text>
<text x="570.5" y="738.1" font-size="5.6" fill="#5e5e5e" font-family="Liberation Serif,Noto Serif CJK SC,serif">花纹板</text>
<text x="598.6" y="738.1" font-size="6.1" fill="#5e5e5e" font-family="Liberation Serif,serif" text-anchor="middle">1</text>
<text x="634.3" y="738.1" font-size="6.1" fill="#5e5e5e" font-family="Liberation Serif,serif" text-anchor="end">0.00</text>
<text x="662.4" y="738.1" font-size="6.1" fill="#5e5e5e" font-family="Liberation Serif,serif" text-anchor="end">0.00</text>
<text x="689.5" y="738.1" font-size="6.1" fill="#5e5e5e" font-family="Liberation Serif,serif" text-anchor="end">5.30</text>
<text x="466.8" y="746.8" font-size="6.1" fill="#5e5e5e" font-family="Liberation Serif,serif">PTB--4</text>
<text x="492.8" y="746.8" font-size="6.1" fill="#5e5e5e" font-family="Liberation Serif,serif">PL4*1107</text>
<text x="546.9" y="746.8" font-size="6.1" fill="#5e5e5e" font-family="Liberation Serif,serif">1500.0</text>
<text x="570.5" y="746.8" font-size="5.6" fill="#5e5e5e" font-family="Liberation Serif,Noto Serif CJK SC,serif">花纹板</text>
<text x="598.6" y="746.8" font-size="6.1" fill="#5e5e5e" font-family="Liberation Serif,serif" text-anchor="middle">1</text>
<text x="634.3" y="746.8" font-size="6.1" fill="#5e5e5e" font-family="Liberation Serif,serif" text-anchor="end">53.81</text>
<text x="662.4" y="746.8" font-size="6.1" fill="#5e5e5e" font-family="Liberation Serif,serif" text-anchor="end">53.81</text>
<text x="689.5" y="746.8" font-size="6.1" fill="#5e5e5e" font-family="Liberation Serif,serif" text-anchor="end">3.34</text>
<text x="466.8" y="755.6" font-size="6.1" fill="#5e5e5e" font-family="Liberation Serif,serif">TB--2</text>
<text x="492.8" y="755.6" font-size="6.1" fill="#5e5e5e" font-family="Liberation Serif,serif">PL4*1500</text>
<text x="546.9" y="755.6" font-size="6.1" fill="#5e5e5e" font-family="Liberation Serif,serif">280.0</text>
<text x="570.5" y="755.6" font-size="5.6" fill="#5e5e5e" font-family="Liberation Serif,Noto Serif CJK SC,serif">花纹板</text>
<text x="598.6" y="755.6" font-size="6.1" fill="#5e5e5e" font-family="Liberation Serif,serif" text-anchor="middle">1</text>
<text x="634.3" y="755.6" font-size="6.1" fill="#5e5e5e" font-family="Liberation Serif,serif" text-anchor="end">0.00</text>
<text x="662.4" y="755.6" font-size="6.1" fill="#5e5e5e" font-family="Liberation Serif,serif" text-anchor="end">0.00</text>
<text x="689.5" y="755.6" font-size="6.1" fill="#5e5e5e" font-family="Liberation Serif,serif" text-anchor="end">0.87</text>
<text x="466.8" y="764.3" font-size="6.1" fill="#5e5e5e" font-family="Liberation Serif,serif">TB--3</text>
<text x="492.8" y="764.3" font-size="6.1" fill="#5e5e5e" font-family="Liberation Serif,serif">PL4*1500</text>
<text x="546.9" y="764.3" font-size="6.1" fill="#5e5e5e" font-family="Liberation Serif,serif">165.2</text>
<text x="570.5" y="764.3" font-size="5.6" fill="#5e5e5e" font-family="Liberation Serif,Noto Serif CJK SC,serif">花纹板</text>
<text x="598.6" y="764.3" font-size="6.1" fill="#5e5e5e" font-family="Liberation Serif,serif" text-anchor="middle">1</text>
<text x="634.3" y="764.3" font-size="6.1" fill="#5e5e5e" font-family="Liberation Serif,serif" text-anchor="end">0.00</text>
<text x="662.4" y="764.3" font-size="6.1" fill="#5e5e5e" font-family="Liberation Serif,serif" text-anchor="end">0.00</text>
<text x="689.5" y="764.3" font-size="6.1" fill="#5e5e5e" font-family="Liberation Serif,serif" text-anchor="end">0.51</text>
<text x="466.8" y="773.0" font-size="6.1" fill="#5e5e5e" font-family="Liberation Serif,serif">TB--4</text>
<text x="492.8" y="773.0" font-size="6.1" fill="#5e5e5e" font-family="Liberation Serif,serif">PL4*1500</text>
<text x="546.9" y="773.0" font-size="6.1" fill="#5e5e5e" font-family="Liberation Serif,serif">441.2</text>
<text x="570.5" y="773.0" font-size="5.6" fill="#5e5e5e" font-family="Liberation Serif,Noto Serif CJK SC,serif">花纹板</text>
<text x="598.6" y="773.0" font-size="6.1" fill="#5e5e5e" font-family="Liberation Serif,serif" text-anchor="middle">13</text>
<text x="634.3" y="773.0" font-size="6.1" fill="#5e5e5e" font-family="Liberation Serif,serif" text-anchor="end">0.00</text>
<text x="662.4" y="773.0" font-size="6.1" fill="#5e5e5e" font-family="Liberation Serif,serif" text-anchor="end">0.00</text>
<text x="689.5" y="773.0" font-size="6.1" fill="#5e5e5e" font-family="Liberation Serif,serif" text-anchor="end">12.41</text>
<text x="611.6" y="781.4" font-size="5" fill="#5fe65f" font-family="Liberation Sans,Noto Sans CJK SC,sans-serif" textLength="32" lengthAdjust="spacingAndGlyphs">合计 (Total)</text>
<text x="646.0" y="781.6" font-size="5.4" fill="#ff8a30" font-family="Liberation Serif,serif" textLength="17" lengthAdjust="spacingAndGlyphs">406.25</text>
<text x="689.0" y="781.2" font-size="5.6" fill="#5e5e5e" font-family="Liberation Serif,serif" text-anchor="end">39.27</text>
<text transform="translate(39.3,782) rotate(-90)" font-size="4.6" fill="#8a8ad8" font-family="Liberation Mono,monospace">Tekla structures</text></svg>
<svg style="left:9px;top:11px" width="15" height="14" viewBox="0 0 15 14"><rect x="0.5" y="0.5" width="14" height="13" fill="#e9eaf4" opacity=".9"/><polygon points="3.2,1.6 14.8,1.6 12,8.6 0.2,8.6" fill="#d6202c"/><polygon points="3.2,1.6 7.3,4.3 6.6,8.6 0.2,8.6" fill="#b00008"/><polygon points="1.2,9.6 6.4,9.6 5.4,12.4" fill="#0d4596"/></svg>
<div class="abs" style="left:27px;top:12px;font-size:11.5px;line-height:14px;color:#8b8f96;white-space:pre;font-family:'Liberation Sans',sans-serif">A    [GT-.1]</div>
<div class="abs" style="left:782px;top:10px;width:30px;height:17px;border:1px solid #93a3c0;border-radius:2.5px;background:linear-gradient(#cfdbea,#c3d2e5 45%,#b9cade 50%,#c2d2e6);box-shadow:inset 0 0 0 1px rgba(255,255,255,.35)"><svg width="28" height="15" viewBox="0 0 29 15.5"><rect x="9.5" y="8" width="10" height="3.8" rx="1" fill="#fff" stroke="#5f6b7e" stroke-width="1"/></svg></div><div class="abs" style="left:814px;top:10px;width:30px;height:17px;border:1px solid #93a3c0;border-radius:2.5px;background:linear-gradient(#cfdbea,#c3d2e5 45%,#b9cade 50%,#c2d2e6);box-shadow:inset 0 0 0 1px rgba(255,255,255,.35)"><svg width="28" height="15" viewBox="0 0 29 15.5"><rect x="10" y="3.5" width="9" height="7.5" rx="0.8" fill="#fff" stroke="#5f6b7e" stroke-width="1"/><rect x="12.6" y="6.2" width="3.8" height="2.3" fill="#b4c3d8" stroke="#5f6b7e" stroke-width="0.8"/></svg></div><div class="abs" style="left:846px;top:10px;width:30px;height:17px;border:1px solid #93a3c0;border-radius:2.5px;background:linear-gradient(#cfdbea,#c3d2e5 45%,#b9cade 50%,#c2d2e6);box-shadow:inset 0 0 0 1px rgba(255,255,255,.35)"><svg width="28" height="15" viewBox="0 0 29 15.5"><path d="M9.6,3.8 L12.7,3.8 L14.5,5.9 L16.3,3.8 L19.4,3.8 L16.2,7.6 L19.6,11.6 L16.4,11.6 L14.5,9.3 L12.6,11.6 L9.4,11.6 L12.8,7.6 Z" fill="#fff" stroke="#5f6b7e" stroke-width="0.9" stroke-linejoin="round"/></svg></div>
</div>

<div id="win2">
<div class="abs" style="left:0;top:-1px;width:889px;height:3px;background:linear-gradient(#a9a9a9,#626262 45%,#6c6c6c)"></div>
<div class="abs" style="left:0;top:2px;width:2px;height:800px;background:#1e1e1e"></div>
<div class="abs" style="left:0;top:2px;width:889px;height:8px;background:#3c3c3c"></div>
<div class="abs" style="left:2px;top:2px;width:885px;height:798px;background:linear-gradient(#9bb6d6,#b9d1ea 28px,#b9d1ea);border-radius:6px 6px 0 0;box-shadow:inset 0 1px 0 rgba(255,255,255,.55)"></div>
<div class="abs" style="left:2px;top:799px;width:885px;height:1px;background:#35c6e8"></div>
<div class="abs" style="left:0;top:800px;width:889px;height:2px;background:#1e1e1e"></div>
<div class="abs" style="left:886.4px;top:4px;width:1px;height:796px;background:#4cc3e6"></div><div class="abs" style="left:887px;top:4px;width:2px;height:798px;background:#55606e"></div>
<div class="abs" id="v3d" style="left:8px;top:30px;width:872px;height:764px;background:linear-gradient(#ffffff,#f1f0f5 30%,#dedce6 65%,#cbc8d7);overflow:hidden">
<svg width="872" height="764" viewBox="893 114 872 764" shape-rendering="geometricPrecision"><polygon points="1273.6,297.8 1700.0,52.1 1700.0,200.0 1295.0,400.0" fill="#bad06e" stroke="none" stroke-width="0.85" stroke-linejoin="round" />
<polygon points="1270.8,290.7 1700.0,45.1 1700.0,52.1 1273.6,297.8" fill="#8a974a" stroke="#4f5a25" stroke-width="0.85" stroke-linejoin="round" />
<polygon points="916.5,319.7 950.4,317.4 950.4,311.2 1274.0,297.6 1279.5,297.8 1307.6,428.1 1299.4,432.8 943.8,447.8" fill="#8c994c" stroke="#4f5a25" stroke-width="0.85" stroke-linejoin="round" />
<polygon points="947.7,304.5 1270.8,290.7 1273.6,297.8 950.4,311.2" fill="#93a052" stroke="#4f5a25" stroke-width="0.85" stroke-linejoin="round" />
<line x1="1015.8" y1="303.2" x2="1051.4" y2="441.2" stroke="#7d8a43" stroke-width="0.6" />
<line x1="1024.8" y1="302.8" x2="1060.4" y2="440.8" stroke="#84914a" stroke-width="0.5" />
<line x1="1100.4" y1="304.5" x2="1131.6" y2="439.0" stroke="#7d8a43" stroke-width="0.6" />
<line x1="1109.4" y1="304.1" x2="1140.6" y2="438.6" stroke="#84914a" stroke-width="0.5" />
<line x1="1182.8" y1="301.9" x2="1214.0" y2="436.8" stroke="#7d8a43" stroke-width="0.6" />
<line x1="1191.8" y1="301.5" x2="1223.0" y2="436.4" stroke="#84914a" stroke-width="0.5" />
<line x1="1263.0" y1="298.7" x2="1291.9" y2="432.3" stroke="#7d8a43" stroke-width="0.6" />
<line x1="1272.0" y1="298.3" x2="1300.9" y2="431.9" stroke="#84914a" stroke-width="0.5" />
<polygon points="1279.5,297.8 1337.2,295.2 1359.1,398.7 1306.8,428.6" fill="#8c994c" stroke="#4f5a25" stroke-width="0.85" stroke-linejoin="round" />
<polygon points="1337.2,264.7 1395.0,262.1 1416.8,365.7 1364.8,395.4" fill="#8c994c" stroke="#4f5a25" stroke-width="0.85" stroke-linejoin="round" />
<polygon points="1395.0,231.6 1452.7,228.9 1474.6,332.7 1422.6,362.4" fill="#8c994c" stroke="#4f5a25" stroke-width="0.85" stroke-linejoin="round" />
<polygon points="1452.7,198.4 1510.5,195.8 1532.4,299.6 1480.3,329.4" fill="#8c994c" stroke="#4f5a25" stroke-width="0.85" stroke-linejoin="round" />
<polygon points="1510.5,165.3 1568.2,162.7 1590.1,266.6 1538.1,296.4" fill="#8c994c" stroke="#4f5a25" stroke-width="0.85" stroke-linejoin="round" />
<polygon points="1568.2,132.2 1625.9,129.6 1647.9,233.6 1595.9,263.3" fill="#8c994c" stroke="#4f5a25" stroke-width="0.85" stroke-linejoin="round" />
<polygon points="1625.9,99.1 1683.7,96.5 1705.7,200.6 1653.6,230.3" fill="#8c994c" stroke="#4f5a25" stroke-width="0.85" stroke-linejoin="round" />
<polygon points="1683.7,66.0 1741.4,63.3 1763.4,167.6 1711.4,197.3" fill="#8c994c" stroke="#4f5a25" stroke-width="0.85" stroke-linejoin="round" />
<polygon points="1741.4,32.8 1799.2,30.2 1821.2,134.6 1769.2,164.3" fill="#8c994c" stroke="#4f5a25" stroke-width="0.85" stroke-linejoin="round" />
<polygon points="1799.2,-0.3 1856.9,-2.9 1878.9,101.5 1826.9,131.3" fill="#8c994c" stroke="#4f5a25" stroke-width="0.85" stroke-linejoin="round" />
<polygon points="1337.2,264.7 1337.2,295.2 1359.1,398.7 1364.8,395.4" fill="#7f8d45" stroke="#4f5a25" stroke-width="0.85" stroke-linejoin="round" />
<polygon points="1395.0,231.6 1395.0,262.1 1416.8,365.7 1422.6,362.4" fill="#7f8d45" stroke="#4f5a25" stroke-width="0.85" stroke-linejoin="round" />
<polygon points="1452.7,198.4 1452.7,228.9 1474.6,332.7 1480.3,329.4" fill="#7f8d45" stroke="#4f5a25" stroke-width="0.85" stroke-linejoin="round" />
<polygon points="1510.5,165.3 1510.5,195.8 1532.4,299.6 1538.1,296.4" fill="#7f8d45" stroke="#4f5a25" stroke-width="0.85" stroke-linejoin="round" />
<polygon points="1568.2,132.2 1568.2,162.7 1590.1,266.6 1595.9,263.3" fill="#7f8d45" stroke="#4f5a25" stroke-width="0.85" stroke-linejoin="round" />
<polygon points="1625.9,99.1 1625.9,129.6 1647.9,233.6 1653.6,230.3" fill="#7f8d45" stroke="#4f5a25" stroke-width="0.85" stroke-linejoin="round" />
<polygon points="1683.7,66.0 1683.7,96.5 1705.7,200.6 1711.4,197.3" fill="#7f8d45" stroke="#4f5a25" stroke-width="0.85" stroke-linejoin="round" />
<polygon points="1741.4,32.8 1741.4,63.3 1763.4,167.6 1769.2,164.3" fill="#7f8d45" stroke="#4f5a25" stroke-width="0.85" stroke-linejoin="round" />
<polygon points="1799.2,-0.3 1799.2,30.2 1821.2,134.6 1826.9,131.3" fill="#7f8d45" stroke="#4f5a25" stroke-width="0.85" stroke-linejoin="round" />
<polygon points="1856.9,-33.4 1856.9,-2.9 1878.9,101.5 1884.7,98.3" fill="#7f8d45" stroke="#4f5a25" stroke-width="0.85" stroke-linejoin="round" />
<line x1="1274.0" y1="297.6" x2="1299.4" y2="432.8" stroke="#7d8a43" stroke-width="0.6" />
<polygon points="943.8,447.8 1299.4,432.8 1301.8,439.1 944.2,453.3" fill="#8a974a" stroke="#4f5a25" stroke-width="0.85" stroke-linejoin="round" />
<polygon points="944.2,453.3 1301.8,439.1 1310.9,466.6 944.4,481.8" fill="#bad06e" stroke="#4f5a25" stroke-width="0.85" stroke-linejoin="round" />
<polygon points="944.4,481.8 1310.9,466.6 1311.9,474.8 945.1,490.7" fill="#8a974a" stroke="#4f5a25" stroke-width="0.85" stroke-linejoin="round" />
<polygon points="1299.4,432.8 1790.0,152.4 1790.0,160.6 1301.8,439.1" fill="#8a974a" stroke="#4f5a25" stroke-width="0.85" stroke-linejoin="round" />
<polygon points="1301.8,439.1 1790.0,160.6 1790.0,193.9 1310.9,466.6" fill="#bad06e" stroke="#4f5a25" stroke-width="0.85" stroke-linejoin="round" />
<polygon points="1310.9,466.6 1790.0,193.9 1790.0,200.8 1311.9,474.8" fill="#8a974a" stroke="#4f5a25" stroke-width="0.85" stroke-linejoin="round" />
<circle cx="954" cy="458.2" r="4" fill="#d9770b" stroke="#b6600a" stroke-width="0.6"/>
<circle cx="954" cy="473.6" r="4" fill="#d9770b" stroke="#b6600a" stroke-width="0.6"/>
<path d="M1593,325.3 L1634,323.6 M1660,322.6 L1670,322 M1697,320.8 L1738,318.8" stroke="#1a1a1a" stroke-width="1" fill="none"/>
<text x="1746" y="317" font-size="12.6" fill="#1a1a1a" stroke="#1a1a1a" stroke-width="0.25" font-family="Liberation Sans,sans-serif">21</text>
<text x="893.5" y="351.6" font-size="12.6" fill="#1a1a1a" stroke="#1a1a1a" stroke-width="0.25" font-family="Liberation Sans,sans-serif">_21</text>
<text x="897" y="562" font-size="13" font-weight="bold" fill="#1a1a1a" font-family="Liberation Sans,sans-serif">A</text>
<text x="946.5" y="872" font-size="13" font-weight="bold" fill="#1a1a1a" font-family="Liberation Sans,sans-serif">A</text>
<line x1="893" y1="565" x2="958.5" y2="875" stroke="#1a1a1a" stroke-width="0.9" stroke-dasharray="1.5,14.3,18.4,13.3"/>
<g>
<rect x="1710" y="827" width="6.2" height="26.6" fill="#a9a7b1"/><rect x="1710" y="827" width="2" height="26.6" fill="#b9b7c1"/>
<rect x="1714.4" y="846.4" width="26" height="4.4" fill="#c9c6ce"/><rect x="1714.4" y="849.4" width="26" height="1.4" fill="#a5a3ad"/>
<path d="M1710.4,851.4 L1716.4,851.4 L1716.8,858 L1710.8,858 Z" fill="#8a8891"/>
<path d="M1712.4,814 L1719.2,827 Q1712.6,830.4 1705.8,827 Z" fill="#0606c8"/>
<path d="M1740,843.4 L1753,848.6 L1740,852.2 Q1738.6,848 1740,843.4 Z" fill="#0fa50f"/>
<path d="M1709.2,861.6 L1712.8,857.4 L1719.2,857.4 L1722,861.2 L1716.6,868.2 Z" fill="#c40000" stroke="#c40000" stroke-width="0.8" stroke-linejoin="round"/>
<text x="1717" y="822" font-size="14.6" fill="#3030e0" font-family="Liberation Sans,sans-serif" textLength="10.4" lengthAdjust="spacingAndGlyphs">Z</text>
<text x="1745" y="844.8" font-size="13.6" fill="#22c022" font-family="Liberation Sans,sans-serif" textLength="8.2" lengthAdjust="spacingAndGlyphs">Y</text>
<text x="1720" y="858" font-size="13.4" fill="#e03038" font-family="Liberation Sans,sans-serif" textLength="9.8" lengthAdjust="spacingAndGlyphs">X</text>
</g></svg>
</div>
<svg style="left:11px;top:12px" width="15" height="13" viewBox="0 0 15 13"><rect x="0.5" y="0.5" width="14" height="12" fill="#eceff2" stroke="#a9adb3"/><rect x="1.5" y="2.5" width="6" height="9" fill="#3d8f6a"/><rect x="1.5" y="2.5" width="6" height="4" fill="#4b86a8"/><rect x="8.5" y="2.5" width="5" height="9" fill="#e5e8ea"/><rect x="12" y="3" width="1.5" height="4" fill="#7fc08b"/></svg>
<div class="abs" style="left:29px;top:12px;font-size:12px;line-height:14px;color:#111;white-space:pre;font-family:'Liberation Sans',sans-serif">View 1 - 3D</div>
<div class="abs" style="left:784px;top:10px;width:30px;height:17px;border:1px solid #5f6f8c;border-radius:2.5px;background:linear-gradient(#dbe6f4,#c3d3e8 45%,#a9bfdc 50%,#b9cde6 85%,#d2e1f2);box-shadow:inset 0 0 0 1px rgba(255,255,255,.35)"><svg width="28" height="15" viewBox="0 0 29 15.5"><rect x="9.5" y="8" width="10" height="3.8" rx="1" fill="#fff" stroke="#4b5566" stroke-width="1"/></svg></div><div class="abs" style="left:816px;top:10px;width:30px;height:17px;border:1px solid #5f6f8c;border-radius:2.5px;background:linear-gradient(#dbe6f4,#c3d3e8 45%,#a9bfdc 50%,#b9cde6 85%,#d2e1f2);box-shadow:inset 0 0 0 1px rgba(255,255,255,.35)"><svg width="28" height="15" viewBox="0 0 29 15.5"><rect x="10" y="3.5" width="9" height="7.5" rx="0.8" fill="#fff" stroke="#4b5566" stroke-width="1"/><rect x="12.6" y="6.2" width="3.8" height="2.3" fill="#8aa2c4" stroke="#4b5566" stroke-width="0.8"/></svg></div><div class="abs" style="left:848px;top:10px;width:30px;height:17px;border:1px solid #5c1f17;border-radius:2.5px;background:linear-gradient(#e9a99b,#d4705c 45%,#c13a24 50%,#d1583f 85%,#e18d78);box-shadow:inset 0 0 0 1px rgba(255,255,255,.35)"><svg width="28" height="15" viewBox="0 0 29 15.5"><path d="M9.6,3.8 L12.7,3.8 L14.5,5.9 L16.3,3.8 L19.4,3.8 L16.2,7.6 L19.6,11.6 L16.4,11.6 L14.5,9.3 L12.6,11.6 L9.4,11.6 L12.8,7.6 Z" fill="#fff" stroke="#5a2a24" stroke-width="0.9" stroke-linejoin="round"/></svg></div>
</div>

<div id="dialog" class="abs" style="left:1243px;top:475px;width:455px;height:321px;background:#fff;border-radius:8px;box-shadow:0 14px 38px 3px rgba(0,0,0,.34),0 3px 12px rgba(0,0,0,.20),0 0 0 1px rgba(120,120,130,.35);overflow:hidden;font-family:'Liberation Sans','Noto Sans CJK SC',sans-serif">
<div class="abs" style="left:0;top:0;width:455px;height:28px;background:#eff4f9"></div>
<svg style="left:8px;top:7px" width="14" height="14" viewBox="0 0 14 14"><rect x="0" y="0" width="14" height="14" fill="#fff"/><path d="M2,5 L5,2.2 L9,2.2 L12,5" stroke="#1a8fd0" stroke-width="1.3" fill="none"/><rect x="6.5" y="5" width="5" height="5" fill="#1b3f8f"/><path d="M2.5,6.5 h3 M2.5,8.5 h3 M4,11.5 h5" stroke="#29a3dc" stroke-width="1.1"/></svg>
<div class="abs" style="left:27px;top:6px;font-size:11.4px;line-height:16px;color:#1b1b1b">坐标标注</div>
<svg style="left:330px;top:0" width="125" height="28" viewBox="0 0 125 28"><path d="M13,14.5 h10" stroke="#222" stroke-width="1"/><rect x="55.5" y="9.5" width="9" height="9" rx="1" fill="none" stroke="#222" stroke-width="1"/><path d="M98.5,9.5 l9,9 M107.5,9.5 l-9,9" stroke="#222" stroke-width="1.1"/></svg>
<div class="abs cb" style="left:19px;top:48.2px"><svg width="14" height="13" viewBox="0 0 14 13"><rect x="0.5" y="0.5" width="12.4" height="12" rx="1" fill="#fff" stroke="#555"/><path d="M2.8,6.6 L5.3,9.3 L10.2,3.2" stroke="#111" stroke-width="1.9" fill="none"/></svg></div>
<div class="abs" style="left:37px;top:45px;font-size:15.2px;line-height:22px;color:#111">绝对坐标</div>
<div class="abs cb" style="left:19px;top:85.2px"><svg width="14" height="13" viewBox="0 0 14 13"><rect x="0.5" y="0.5" width="12.4" height="12" rx="1" fill="#fff" stroke="#555"/><path d="M2.8,6.6 L5.3,9.3 L10.2,3.2" stroke="#111" stroke-width="1.9" fill="none"/></svg></div>
<div class="abs" style="left:37px;top:82px;font-size:15.2px;line-height:22px;color:#111">图纸坐标</div>
<div class="abs cb" style="left:19px;top:122.2px"><svg width="14" height="13" viewBox="0 0 14 13"><rect x="0.5" y="0.5" width="12.4" height="12" rx="1" fill="#fff" stroke="#555"/></svg></div>
<div class="abs" style="left:37px;top:119px;font-size:15.2px;line-height:22px;color:#111">原点坐标</div>
<div class="abs" style="left:360px;top:154px;width:81px;height:40px;background:#cbe4f6;border:1px solid #4a9bd4;color:#fdfeff;font-size:15px;line-height:38px;text-align:center">标注坐标</div>
</div>

<div id="side" class="abs" style="left:1776px;top:86px;width:24px;height:802px;overflow:hidden">
<svg width="24" height="802" viewBox="1776 86 24 802"><rect x="1776" y="86" width="1" height="802" fill="#dcdbe2"/>
<rect x="1777" y="115" width="23" height="1" fill="#dcdbe2"/>
<rect x="1777" y="142" width="23" height="1" fill="#dcdbe2"/>
<rect x="1777" y="169.5" width="23" height="1" fill="#dcdbe2"/>
<rect x="1777" y="197" width="23" height="1" fill="#dcdbe2"/>
<rect x="1777" y="224" width="23" height="1" fill="#dcdbe2"/>
<path d="M1790,94.6 L1796.4,99 L1790,103.4" fill="none" stroke="#3a394a" stroke-width="1.7"/>
<path d="M1787,125.6 L1794,121.4 L1801,125.6 Z" fill="#3a394a"/><path d="M1789,126.6 V133 M1792,126.6 V133 M1795,126.6 V133 M1798,126.6 V133" stroke="#3a394a" stroke-width="1.4"/><path d="M1787.4,134 H1801 M1786.6,136 H1801" stroke="#3a394a" stroke-width="1.1"/>
<rect x="1786.4" y="149" width="16" height="14.2" fill="none" stroke="#3a394a" stroke-width="1.2"/><rect x="1788.6" y="151.4" width="12" height="2" fill="#3a394a"/><rect x="1788.6" y="155.4" width="2.6" height="5.6" fill="#3a394a"/><rect x="1793" y="155.4" width="8" height="5.6" fill="#3a394a"/>
<circle cx="1794.4" cy="183.4" r="7.6" fill="none" stroke="#3a394a" stroke-width="1.3"/><path d="M1789.4,180 q2,-2.2 4,-1.4 q0.6,2.4 -1.2,3.4 q0.6,2.6 -0.8,4.8 q-1.6,-2.6 -2.6,-4.2 Z M1796,178.2 q2.4,0.2 3.6,1.8 l-1.2,2.6 q-2.2,-0.6 -2.8,-2 Z M1796.4,185 l2.6,-0.6 l0.4,2.6 l-1.8,1.4 Z" fill="#3a394a"/>
<rect x="1786.2" y="203.8" width="6" height="6.2" fill="#3a394a"/><path d="M1794.6,210 L1798,203.8 L1801.4,210 Z" fill="#3a394a"/><circle cx="1789.1" cy="215.2" r="3.1" fill="#3a394a"/><path d="M1794.4,215.2 H1801 M1797.4,212.2 V218.4" stroke="#3a394a" stroke-width="1.7"/></svg>
</div>

<div id="bottom" class="abs" style="left:0;top:886px;width:1800px;height:46px;overflow:hidden">
<svg width="1800" height="46" viewBox="0 886 1800 46"><rect x="0" y="886" width="1800" height="46" fill="#f3f2f7"/>
<rect x="0" y="888" width="1800" height="1" fill="#e2e1e7"/>
<rect x="-2" y="890.5" width="338" height="26.5" fill="#f5f4f9" stroke="#e3e2e8" stroke-width="1"/>
<rect x="0" y="891" width="3" height="26" fill="#e9e8ee"/>
<rect x="339.5" y="890.5" width="280" height="23" fill="#f5f4f9" stroke="#e3e2e8" stroke-width="1"/>
<rect x="340" y="891" width="3" height="22" fill="#e9e8ee"/>
<rect x="4.9" y="894.6" width="18.3" height="18.2" fill="#d3d3d9"/>
<rect x="25.6" y="894.6" width="18.3" height="18.2" fill="#d3d3d9"/>
<rect x="46.2" y="894.6" width="18.3" height="18.2" fill="#d3d3d9"/>
<rect x="66.9" y="894.6" width="18.3" height="18.2" fill="#d3d3d9"/>
<rect x="87.5" y="894.6" width="18.3" height="18.2" fill="#d3d3d9"/>
<rect x="108.2" y="894.6" width="18.3" height="18.2" fill="#d3d3d9"/>
<rect x="128.9" y="894.6" width="18.3" height="18.2" fill="#d3d3d9"/>
<rect x="149.5" y="894.6" width="18.3" height="18.2" fill="#d3d3d9"/>
<rect x="170.2" y="894.6" width="18.3" height="18.2" fill="#d3d3d9"/>
<rect x="211.5" y="894.6" width="18.3" height="18.2" fill="#d3d3d9"/>
<rect x="252.8" y="894.6" width="18.3" height="18.2" fill="#d3d3d9"/>
<rect x="273.5" y="894.6" width="18.3" height="18.2" fill="#d3d3d9"/>
<g transform="translate(14.05,903.7)"><polygon points="-4,-5.6 -4,3.9 -1.8,1.7 0.4,5.7 2,4.8 0,1.3 3.8,0.8" fill="#3a394a"/></g>
<g transform="translate(34.71,903.7)"><path d="M-5.2,5.4 L5.3,-5.1" fill="none" stroke="#3a394a" stroke-width="1.3"/></g>
<text x="55.4" y="909.2" font-size="17" font-weight="bold" fill="#3a394a" text-anchor="middle" font-family="Liberation Serif,serif">T</text>
<g transform="translate(76.03,903.7)"><path d="M-5.4,2.8 L-2.6,-0.6 H5.2" fill="none" stroke="#3a394a" stroke-width="1.6"/><path d="M-5.6,3 L-1.4,1" fill="none" stroke="#3a394a" stroke-width="1.2"/></g>
<g transform="translate(96.69,903.7)"><rect x="-5.9" y="-5.5" width="11.7" height="10.9" fill="#228bd0"/></g>
<g transform="translate(117.35,903.7)"><rect x="-5.4" y="-5.3" width="10.8" height="10.6" fill="none" stroke="#3a394a" stroke-width="1.7"/><rect x="-1.6" y="-1.6" width="3.2" height="3.2" fill="#3a394a"/></g>
<g transform="translate(138.01,903.7)"><path d="M-5,4.6 L0,-1.4" fill="none" stroke="#3a394a" stroke-width="1" stroke-dasharray="1.2,1.2"/><path d="M-3,4.6 L1.6,-0.6" stroke="#8d8c96" stroke-width="0.8" stroke-dasharray="1,1.3"/><path d="M-0.6,-1.8 L2.6,-5.2 L5.6,-1.6 L5.4,1 L2.6,-2 L0.6,-0.4 Z" fill="#3a394a"/></g>
<g transform="translate(158.67,903.7)"><rect x="-5.6" y="-3.6" width="11.2" height="8.2" fill="none" stroke="#3a394a" stroke-width="1.5"/><rect x="-6.3" y="-4.6" width="12.6" height="2.6" fill="#3a394a"/></g>
<g transform="translate(179.33,903.7)"><path d="M-6,0 H6" fill="none" stroke="#3a394a" stroke-width="1.1"/><path d="M-3.8,-4 V4 M0,-4 V4 M3.8,-4 V4" fill="none" stroke="#3a394a" stroke-width="1.1"/></g>
<g transform="translate(199.99,903.7)"><path d="M-5,0.6 H5" fill="none" stroke="#3a394a" stroke-width="1.1"/><path d="M-5,-2.8 V4 M5,-2.8 V4" fill="none" stroke="#3a394a" stroke-width="1.2"/></g>
<g transform="translate(220.65,903.7)"><path d="M-5.6,-2.2 H4 M-5.6,1.2 H4 M-3.2,-5.6 V4.6 M0.2,-5.6 V4.6 M3.4,-5.6 V4.6" fill="none" stroke="#3a394a" stroke-width="1.1"/><path d="M4,-2.2 H6 M4,1.2 H6 M-5.6,4.4 H6 M-3.2,4.6 V6.2 M0.2,4.6 V6.2 M3.4,4.6 V6.2 M5.6,-5.6 V4" stroke="#77767f" stroke-width="0.8" stroke-dasharray="1,1" fill="none"/></g>
<g transform="translate(241.31,903.7)"><path d="M-5.6,-2.2 H2 M-5.6,1.2 H2 M-3.2,-5.6 V4.6 M0.2,-5.6 V4.6" stroke="#6b6a75" stroke-width="0.9" fill="none"/><path d="M-5.6,4.4 H3 M-3.2,4.6 V6.2 M0.2,4.6 V6.2 M5.6,-5.6 V5" stroke="#9a99a2" stroke-width="0.8" stroke-dasharray="1,1" fill="none"/><path d="M3,-6 V6" stroke="#f08a1c" stroke-width="1.3"/></g>
<g transform="translate(261.97,903.7)"><circle cx="1.6" cy="-1.6" r="3.8" fill="none" stroke="#3a394a" stroke-width="1.3"/><rect x="0.9" y="-2.3" width="1.4" height="1.4" fill="#3a394a"/><path d="M-1.2,1 L-3.4,4.6 H-6" fill="none" stroke="#3a394a" stroke-width="1.2"/></g>
<g transform="translate(282.63,903.7)"><path d="M-2.6,-5.6 V-2 M2.2,-5.6 V-2" fill="none" stroke="#3a394a" stroke-width="1.5"/><path d="M-4.2,-2.4 H3.8 V1.6 L1.6,3.8 V6 H-2 V3.8 L-4.2,1.6 Z" fill="#3a394a"/></g>
<g transform="translate(303.29,903.7)"><circle r="5.6" fill="#55545f"/><path d="M-5,-3 L3,5 M-5.6,0.4 L-0.4,5.6 M-2.8,-5 L5,2.8 M0.4,-5.6 L5.6,-0.4 M-3,5 L5,-3 M-5.6,-0.4 L-0.4,-5.6 M0.4,5.6 L5.6,0.4 M-5,3 L3,-5" stroke="#f3f2f7" stroke-width="0.7"/></g>
<g transform="translate(323.95,903.7)"><path d="M-5.8,0.2 Q0,-6 5.8,0.2 Q0,6 -5.8,0.2 Z" fill="#3a394a"/><circle r="2.5" cy="0.2" fill="#f3f2f7"/><circle r="1.5" cy="0.2" fill="#3a394a"/></g>
<rect x="345.9" y="892.6" width="18.3" height="18.2" fill="#d3d3d9"/>
<rect x="366.5" y="892.6" width="18.3" height="18.2" fill="#d3d3d9"/>
<rect x="407.9" y="892.6" width="18.3" height="18.2" fill="#d3d3d9"/>
<rect x="428.5" y="892.6" width="18.3" height="18.2" fill="#d3d3d9"/>
<rect x="449.3" y="892.6" width="18.3" height="18.2" fill="#d3d3d9"/>
<rect x="470.0" y="892.6" width="18.3" height="18.2" fill="#d3d3d9"/>
<rect x="490.7" y="892.6" width="18.3" height="18.2" fill="#d3d3d9"/>
<rect x="535.8" y="892.6" width="18.3" height="18.2" fill="#d3d3d9"/>
<rect x="556.6" y="892.6" width="18.3" height="18.2" fill="#d3d3d9"/>
<rect x="532.6" y="892" width="1" height="20" fill="#e0dfe6"/>
<g transform="translate(355.05,901.7)"><rect x="-5.4" y="-5.4" width="10.8" height="10.8" fill="none" stroke="#3a394a" stroke-width="1.6"/><path d="M-5.4,-5.4 L5.4,5.4 M5.4,-5.4 L-5.4,5.4" fill="none" stroke="#3a394a" stroke-width="1.3"/></g>
<g transform="translate(375.65,901.7)"><rect x="-5.2" y="-5.2" width="10.4" height="10.4" fill="none" stroke="#3a394a" stroke-width="1.4"/></g>
<g transform="translate(396.25,901.7)"><circle r="5.4" fill="none" stroke="#3a394a" stroke-width="1.3"/></g>
<g transform="translate(417.05,901.7)"><path d="M0,-4.6 L4.8,4.4 H-4.8 Z" fill="none" stroke="#3a394a" stroke-width="1.3"/></g>
<g transform="translate(437.65,901.7)"><path d="M-5,-5 L5,5 M5,-5 L-5,5" fill="none" stroke="#3a394a" stroke-width="1.3"/></g>
<g transform="translate(458.45,901.7)"><path d="M-5.6,5 H5 V-5" fill="none" stroke="#3a394a" stroke-width="1.4"/><rect x="1" y="0.8" width="4" height="4.2" fill="none" stroke="#3a394a" stroke-width="1.1"/></g>
<g transform="translate(479.15,901.7)"><path d="M-3.4,-5.4 H3.4 L-3.4,5.4 H3.4 Z" fill="none" stroke="#3a394a" stroke-width="1.4" stroke-linejoin="round"/></g>
<g transform="translate(499.85,901.7)"><path d="M-1,-5.4 H5 L-1,5.4 H5 Z" fill="none" stroke="#3a394a" stroke-width="1.2" stroke-linejoin="round"/><path d="M-6.4,-0.6 H-1" stroke="#3a394a" stroke-width="0.9" stroke-dasharray="1.2,0.9"/><path d="M-1.4,-2.2 L0.6,-0.6 L-1.4,1" fill="#3a394a"/></g>
<g transform="translate(520.65,901.7)"><path d="M-5.2,1.6 L-2,3.6 L1.4,-1.4 L5.2,2" fill="none" stroke="#3a394a" stroke-width="1.3"/></g>
<g transform="translate(544.95,901.7)"><rect x="-6" y="-6" width="12" height="12" fill="#55545f"/><rect x="-2.6" y="-2.6" width="5.2" height="5.2" fill="#f6921e"/></g>
<g transform="translate(565.75,901.7)"><rect x="-4.4" y="-4.4" width="8.8" height="8.8" fill="#55545f"/><g fill="#f6821e"><rect x="-6.2" y="-6.2" width="2.6" height="2.6"/><rect x="3.6" y="-6.2" width="2.6" height="2.6"/><rect x="-6.2" y="3.6" width="2.6" height="2.6"/><rect x="3.6" y="3.6" width="2.6" height="2.6"/></g></g>
<g transform="translate(586.55,901.7)"><path d="M-5.4,-2.4 H4" fill="none" stroke="#3a394a" stroke-width="1.6"/><path d="M-3.6,-4.6 V2.6 M1.4,-2.4 V5" fill="none" stroke="#3a394a" stroke-width="1.5"/><circle cx="4.4" cy="-3" r="1.9" fill="#3a394a"/><path d="M-5,1.4 L-3.6,4.8 L-2.2,1.4 Z" fill="#3a394a"/></g>
<g transform="translate(607.25,901.7)"><path d="M-5.8,0.2 Q0,-6 5.8,0.2 Q0,6 -5.8,0.2 Z" fill="#3a394a"/><circle r="2.5" cy="0.2" fill="#f3f2f7"/><circle r="1.5" cy="0.2" fill="#3a394a"/></g>
<text x="-1" y="931.6" font-size="11" fill="#1e1e28">选择视图</text>
<text x="1307" y="931.7" font-size="10.5" fill="#1e1e28">d</text><text x="1361" y="931.7" font-size="10.5" fill="#1e1e28">0</text><text x="1388.6" y="931.7" font-size="10.5" fill="#1e1e28">Pan</text><text x="1436" y="931.7" font-size="10.5" fill="#1e1e28" textLength="101" lengthAdjust="spacingAndGlyphs">目前的状态 1, 状态 1</text><text x="1650" y="931.7" font-size="10.5" fill="#1e1e28" textLength="84" lengthAdjust="spacingAndGlyphs">0 + 0 选择的物体</text></svg>
</div>

</body>
</html>
